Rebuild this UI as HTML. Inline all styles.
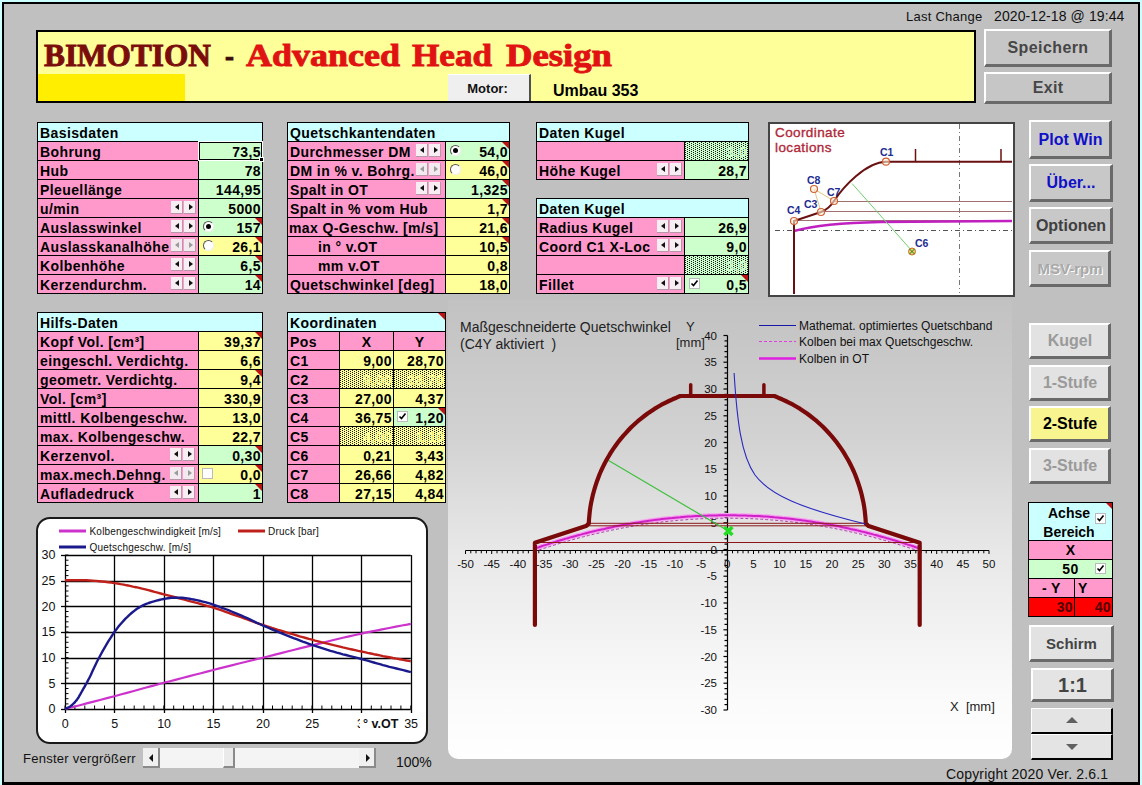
<!DOCTYPE html><html><head><meta charset="utf-8"><style>
html,body{margin:0;padding:0;}
body{width:1142px;height:785px;overflow:hidden;position:relative;background:#CCFFFF;font-family:"Liberation Sans",sans-serif;}
</style></head><body>
<div style="position:absolute;left:2px;top:2px;width:1138px;height:783px;background:#000;"></div>
<div style="position:absolute;left:4px;top:4px;width:1134px;height:778px;background:#C0C0C0;"></div>
<div style="position:absolute;left:906px;top:9px;white-space:nowrap;font-family:'Liberation Sans',sans-serif;font-size:13px;color:#111;letter-spacing:0.25px;line-height:15px;">Last Change</div>
<div style="position:absolute;left:994px;top:9px;white-space:nowrap;font-family:'Liberation Sans',sans-serif;font-size:14px;color:#111;letter-spacing:0.1px;line-height:15px;">2020-12-18 @ 19:44</div>
<div style="position:absolute;left:36px;top:30px;width:940px;height:73px;background:#000;"></div>
<div style="position:absolute;left:38px;top:32px;width:936px;height:69px;background:#FFFF99;"></div>
<div style="position:absolute;left:38px;top:74px;width:147px;height:27px;background:#FFEE00;"></div>
<div style="position:absolute;left:44px;top:36px;font-family:'Liberation Serif',serif;font-weight:bold;font-size:31px;line-height:40px;color:#7A0C0C;white-space:nowrap;transform:scaleX(1.0097);transform-origin:0 0;-webkit-text-stroke:0.9px #7A0C0C;">BIMOTION</div>
<div style="position:absolute;left:225px;top:36px;font-family:'Liberation Serif',serif;font-weight:bold;font-size:31px;line-height:40px;color:#3A0A0A;white-space:nowrap;transform:scaleX(0.8654);transform-origin:0 0;-webkit-text-stroke:0.9px #3A0A0A;">-</div>
<div style="position:absolute;left:246px;top:36px;font-family:'Liberation Serif',serif;font-weight:bold;font-size:31px;line-height:40px;color:#E01212;white-space:nowrap;transform:scaleX(1.1614);transform-origin:0 0;-webkit-text-stroke:0.9px #E01212;">Advanced</div>
<div style="position:absolute;left:412px;top:36px;font-family:'Liberation Serif',serif;font-weight:bold;font-size:31px;line-height:40px;color:#E01212;white-space:nowrap;transform:scaleX(1.1331);transform-origin:0 0;-webkit-text-stroke:0.9px #E01212;">Head</div>
<div style="position:absolute;left:506px;top:36px;font-family:'Liberation Serif',serif;font-weight:bold;font-size:31px;line-height:40px;color:#E01212;white-space:nowrap;transform:scaleX(1.1830);transform-origin:0 0;-webkit-text-stroke:0.9px #E01212;">Design</div>
<div style="position:absolute;left:448px;top:74px;width:81px;height:26px;background:#EFEFEF;border-right:2px solid #505050;border-top:1px solid #fff;"></div>
<div style="position:absolute;left:447px;top:75px;width:81px;white-space:nowrap;font-family:'Liberation Sans',sans-serif;font-weight:bold;font-size:13px;line-height:27px;text-align:center;color:#111;">Motor:</div>
<div style="position:absolute;left:553px;top:82px;white-space:nowrap;font-family:'Liberation Sans',sans-serif;font-weight:bold;font-size:16px;line-height:18px;color:#000;">Umbau 353</div>
<div style="position:absolute;left:984px;top:29px;width:123px;height:33px;background:#C6C6C6;border-top:2px solid #FFFFFF;border-left:2px solid #FFFFFF;border-right:3px solid #6A6A6A;border-bottom:3px solid #6A6A6A;"></div>
<div style="position:absolute;left:984px;top:29px;width:128px;height:38px;line-height:38px;text-align:center;font-family:'Liberation Sans',sans-serif;font-weight:bold;font-size:16px;color:#464646;letter-spacing:0.4px;white-space:nowrap;">Speichern</div>
<div style="position:absolute;left:984px;top:72px;width:123px;height:27px;background:#C6C6C6;border-top:2px solid #FFFFFF;border-left:2px solid #FFFFFF;border-right:3px solid #6A6A6A;border-bottom:3px solid #6A6A6A;"></div>
<div style="position:absolute;left:984px;top:72px;width:128px;height:32px;line-height:32px;text-align:center;font-family:'Liberation Sans',sans-serif;font-weight:bold;font-size:16px;color:#464646;letter-spacing:0.3px;white-space:nowrap;">Exit</div>
<div style="position:absolute;left:37px;top:122px;width:226px;height:172px;background:#000;"></div>
<div style="position:absolute;left:38px;top:123px;width:224px;height:18px;background:#CCFFFF;"></div>
<div style="position:absolute;left:40px;top:124px;height:19px;white-space:nowrap;font-family:'Liberation Sans',sans-serif;font-weight:bold;font-size:14px;line-height:19px;color:#000;letter-spacing:0.4px;">Basisdaten</div>
<div style="position:absolute;left:38px;top:142px;width:160px;height:18px;background:#FF99CC;"></div>
<div style="position:absolute;left:40px;top:143px;height:19px;white-space:nowrap;font-family:'Liberation Sans',sans-serif;font-weight:bold;font-size:14px;line-height:19px;color:#000;letter-spacing:0.4px;">Bohrung</div>
<div style="position:absolute;left:199px;top:142px;width:63px;height:18px;background:#CCFFCC;"></div>
<div style="position:absolute;left:199px;top:143px;width:62px;height:19px;white-space:nowrap;font-family:'Liberation Sans',sans-serif;font-weight:bold;font-size:14px;line-height:19px;color:#000;letter-spacing:0.4px;text-align:right;">73,5</div>
<div style="position:absolute;left:38px;top:161px;width:160px;height:18px;background:#FF99CC;"></div>
<div style="position:absolute;left:40px;top:162px;height:19px;white-space:nowrap;font-family:'Liberation Sans',sans-serif;font-weight:bold;font-size:14px;line-height:19px;color:#000;letter-spacing:0.4px;">Hub</div>
<div style="position:absolute;left:199px;top:161px;width:63px;height:18px;background:#CCFFCC;"></div>
<div style="position:absolute;left:199px;top:162px;width:62px;height:19px;white-space:nowrap;font-family:'Liberation Sans',sans-serif;font-weight:bold;font-size:14px;line-height:19px;color:#000;letter-spacing:0.4px;text-align:right;">78</div>
<div style="position:absolute;left:38px;top:180px;width:160px;height:18px;background:#FF99CC;"></div>
<div style="position:absolute;left:40px;top:181px;height:19px;white-space:nowrap;font-family:'Liberation Sans',sans-serif;font-weight:bold;font-size:14px;line-height:19px;color:#000;letter-spacing:0.4px;">Pleuellänge</div>
<div style="position:absolute;left:199px;top:180px;width:63px;height:18px;background:#CCFFCC;"></div>
<div style="position:absolute;left:199px;top:181px;width:62px;height:19px;white-space:nowrap;font-family:'Liberation Sans',sans-serif;font-weight:bold;font-size:14px;line-height:19px;color:#000;letter-spacing:0.4px;text-align:right;">144,95</div>
<div style="position:absolute;left:38px;top:199px;width:160px;height:18px;background:#FF99CC;"></div>
<div style="position:absolute;left:40px;top:200px;height:19px;white-space:nowrap;font-family:'Liberation Sans',sans-serif;font-weight:bold;font-size:14px;line-height:19px;color:#000;letter-spacing:0.4px;">u/min</div>
<div style="position:absolute;left:199px;top:199px;width:63px;height:18px;background:#CCFFCC;"></div>
<div style="position:absolute;left:199px;top:200px;width:62px;height:19px;white-space:nowrap;font-family:'Liberation Sans',sans-serif;font-weight:bold;font-size:14px;line-height:19px;color:#000;letter-spacing:0.4px;text-align:right;">5000</div>
<div style="position:absolute;left:38px;top:218px;width:160px;height:18px;background:#FF99CC;"></div>
<div style="position:absolute;left:40px;top:219px;height:19px;white-space:nowrap;font-family:'Liberation Sans',sans-serif;font-weight:bold;font-size:14px;line-height:19px;color:#000;letter-spacing:0.4px;">Auslasswinkel</div>
<div style="position:absolute;left:199px;top:218px;width:63px;height:18px;background:#CCFFCC;"></div>
<div style="position:absolute;left:199px;top:219px;width:62px;height:19px;white-space:nowrap;font-family:'Liberation Sans',sans-serif;font-weight:bold;font-size:14px;line-height:19px;color:#000;letter-spacing:0.4px;text-align:right;">157</div>
<div style="position:absolute;left:255px;top:218px;width:0;height:0;border-left:7px solid transparent;border-top:7px solid #BC1414;"></div>
<div style="position:absolute;left:38px;top:237px;width:160px;height:18px;background:#FF99CC;"></div>
<div style="position:absolute;left:40px;top:238px;height:19px;white-space:nowrap;font-family:'Liberation Sans',sans-serif;font-weight:bold;font-size:14px;line-height:19px;color:#000;letter-spacing:0.4px;">Auslasskanalhöhe</div>
<div style="position:absolute;left:199px;top:237px;width:63px;height:18px;background:#FFFF99;"></div>
<div style="position:absolute;left:199px;top:238px;width:62px;height:19px;white-space:nowrap;font-family:'Liberation Sans',sans-serif;font-weight:bold;font-size:14px;line-height:19px;color:#000;letter-spacing:0.4px;text-align:right;">26,1</div>
<div style="position:absolute;left:255px;top:237px;width:0;height:0;border-left:7px solid transparent;border-top:7px solid #BC1414;"></div>
<div style="position:absolute;left:38px;top:256px;width:160px;height:18px;background:#FF99CC;"></div>
<div style="position:absolute;left:40px;top:257px;height:19px;white-space:nowrap;font-family:'Liberation Sans',sans-serif;font-weight:bold;font-size:14px;line-height:19px;color:#000;letter-spacing:0.4px;">Kolbenhöhe</div>
<div style="position:absolute;left:199px;top:256px;width:63px;height:18px;background:#CCFFCC;"></div>
<div style="position:absolute;left:199px;top:257px;width:62px;height:19px;white-space:nowrap;font-family:'Liberation Sans',sans-serif;font-weight:bold;font-size:14px;line-height:19px;color:#000;letter-spacing:0.4px;text-align:right;">6,5</div>
<div style="position:absolute;left:255px;top:256px;width:0;height:0;border-left:7px solid transparent;border-top:7px solid #BC1414;"></div>
<div style="position:absolute;left:38px;top:275px;width:160px;height:18px;background:#FF99CC;"></div>
<div style="position:absolute;left:40px;top:276px;height:19px;white-space:nowrap;font-family:'Liberation Sans',sans-serif;font-weight:bold;font-size:14px;line-height:19px;color:#000;letter-spacing:0.4px;">Kerzendurchm.</div>
<div style="position:absolute;left:199px;top:275px;width:63px;height:18px;background:#CCFFCC;"></div>
<div style="position:absolute;left:199px;top:276px;width:62px;height:19px;white-space:nowrap;font-family:'Liberation Sans',sans-serif;font-weight:bold;font-size:14px;line-height:19px;color:#000;letter-spacing:0.4px;text-align:right;">14</div>
<div style="position:absolute;left:255px;top:275px;width:0;height:0;border-left:7px solid transparent;border-top:7px solid #BC1414;"></div>
<div style="position:absolute;left:199px;top:142px;width:61px;height:16px;border:1px solid #000;box-shadow:0 0 0 1px #fff;"></div>
<div style="position:absolute;left:259px;top:157px;width:3px;height:3px;background:#000;border:1px solid #fff;"></div>
<div style="position:absolute;left:171px;top:201px;width:11px;height:12px;background:#F6EEF2;border-right:1px solid #B898A8;border-bottom:1px solid #B898A8;"></div>
<div style="position:absolute;left:175px;top:204px;width:0;height:0;border-top:3.5px solid transparent;border-bottom:3.5px solid transparent;border-right:4px solid #111;"></div>
<div style="position:absolute;left:184px;top:201px;width:11px;height:12px;background:#F6EEF2;border-right:1px solid #B898A8;border-bottom:1px solid #B898A8;"></div>
<div style="position:absolute;left:189px;top:204px;width:0;height:0;border-top:3.5px solid transparent;border-bottom:3.5px solid transparent;border-left:4px solid #111;"></div>
<div style="position:absolute;left:171px;top:220px;width:11px;height:12px;background:#F6EEF2;border-right:1px solid #B898A8;border-bottom:1px solid #B898A8;"></div>
<div style="position:absolute;left:175px;top:223px;width:0;height:0;border-top:3.5px solid transparent;border-bottom:3.5px solid transparent;border-right:4px solid #111;"></div>
<div style="position:absolute;left:184px;top:220px;width:11px;height:12px;background:#F6EEF2;border-right:1px solid #B898A8;border-bottom:1px solid #B898A8;"></div>
<div style="position:absolute;left:189px;top:223px;width:0;height:0;border-top:3.5px solid transparent;border-bottom:3.5px solid transparent;border-left:4px solid #111;"></div>
<div style="position:absolute;left:171px;top:258px;width:11px;height:12px;background:#F6EEF2;border-right:1px solid #B898A8;border-bottom:1px solid #B898A8;"></div>
<div style="position:absolute;left:175px;top:261px;width:0;height:0;border-top:3.5px solid transparent;border-bottom:3.5px solid transparent;border-right:4px solid #111;"></div>
<div style="position:absolute;left:184px;top:258px;width:11px;height:12px;background:#F6EEF2;border-right:1px solid #B898A8;border-bottom:1px solid #B898A8;"></div>
<div style="position:absolute;left:189px;top:261px;width:0;height:0;border-top:3.5px solid transparent;border-bottom:3.5px solid transparent;border-left:4px solid #111;"></div>
<div style="position:absolute;left:171px;top:277px;width:11px;height:12px;background:#F6EEF2;border-right:1px solid #B898A8;border-bottom:1px solid #B898A8;"></div>
<div style="position:absolute;left:175px;top:280px;width:0;height:0;border-top:3.5px solid transparent;border-bottom:3.5px solid transparent;border-right:4px solid #111;"></div>
<div style="position:absolute;left:184px;top:277px;width:11px;height:12px;background:#F6EEF2;border-right:1px solid #B898A8;border-bottom:1px solid #B898A8;"></div>
<div style="position:absolute;left:189px;top:280px;width:0;height:0;border-top:3.5px solid transparent;border-bottom:3.5px solid transparent;border-left:4px solid #111;"></div>
<div style="position:absolute;left:171px;top:239px;width:11px;height:12px;background:#F2EAEE;border-right:1px solid #B898A8;border-bottom:1px solid #B898A8;"></div>
<div style="position:absolute;left:175px;top:242px;width:0;height:0;border-top:3.5px solid transparent;border-bottom:3.5px solid transparent;border-right:4px solid #9a9a9a;"></div>
<div style="position:absolute;left:184px;top:239px;width:11px;height:12px;background:#F2EAEE;border-right:1px solid #B898A8;border-bottom:1px solid #B898A8;"></div>
<div style="position:absolute;left:189px;top:242px;width:0;height:0;border-top:3.5px solid transparent;border-bottom:3.5px solid transparent;border-left:4px solid #9a9a9a;"></div>
<div style="position:absolute;left:203px;top:221px;width:9px;height:9px;border-radius:50%;background:#fff;border-top:1px solid #555;border-left:1px solid #555;border-right:1px solid #eee;border-bottom:1px solid #eee;"></div>
<div style="position:absolute;left:206px;top:224px;width:5px;height:5px;border-radius:50%;background:#000;"></div>
<div style="position:absolute;left:203px;top:240px;width:9px;height:9px;border-radius:50%;background:#fff;border-top:1px solid #555;border-left:1px solid #555;border-right:1px solid #eee;border-bottom:1px solid #eee;"></div>
<div style="position:absolute;left:287px;top:122px;width:223px;height:172px;background:#000;"></div>
<div style="position:absolute;left:288px;top:123px;width:221px;height:18px;background:#CCFFFF;"></div>
<div style="position:absolute;left:290px;top:124px;height:19px;white-space:nowrap;font-family:'Liberation Sans',sans-serif;font-weight:bold;font-size:14px;line-height:19px;color:#000;letter-spacing:0.4px;">Quetschkantendaten</div>
<div style="position:absolute;left:288px;top:142px;width:157px;height:18px;background:#FF99CC;"></div>
<div style="position:absolute;left:290px;top:143px;height:19px;white-space:nowrap;font-family:'Liberation Sans',sans-serif;font-weight:bold;font-size:14px;line-height:19px;color:#000;letter-spacing:0.4px;">Durchmesser DM</div>
<div style="position:absolute;left:446px;top:142px;width:63px;height:18px;background:#CCFFCC;"></div>
<div style="position:absolute;left:446px;top:143px;width:62px;height:19px;white-space:nowrap;font-family:'Liberation Sans',sans-serif;font-weight:bold;font-size:14px;line-height:19px;color:#000;letter-spacing:0.4px;text-align:right;">54,0</div>
<div style="position:absolute;left:502px;top:142px;width:0;height:0;border-left:7px solid transparent;border-top:7px solid #BC1414;"></div>
<div style="position:absolute;left:288px;top:161px;width:157px;height:18px;background:#FF99CC;"></div>
<div style="position:absolute;left:290px;top:162px;height:19px;white-space:nowrap;font-family:'Liberation Sans',sans-serif;font-weight:bold;font-size:14px;line-height:19px;color:#000;letter-spacing:0.4px;">DM in % v. Bohrg.</div>
<div style="position:absolute;left:446px;top:161px;width:63px;height:18px;background:#FFFF99;"></div>
<div style="position:absolute;left:446px;top:162px;width:62px;height:19px;white-space:nowrap;font-family:'Liberation Sans',sans-serif;font-weight:bold;font-size:14px;line-height:19px;color:#000;letter-spacing:0.4px;text-align:right;">46,0</div>
<div style="position:absolute;left:502px;top:161px;width:0;height:0;border-left:7px solid transparent;border-top:7px solid #BC1414;"></div>
<div style="position:absolute;left:288px;top:180px;width:157px;height:18px;background:#FF99CC;"></div>
<div style="position:absolute;left:290px;top:181px;height:19px;white-space:nowrap;font-family:'Liberation Sans',sans-serif;font-weight:bold;font-size:14px;line-height:19px;color:#000;letter-spacing:0.4px;">Spalt in OT</div>
<div style="position:absolute;left:446px;top:180px;width:63px;height:18px;background:#CCFFCC;"></div>
<div style="position:absolute;left:446px;top:181px;width:62px;height:19px;white-space:nowrap;font-family:'Liberation Sans',sans-serif;font-weight:bold;font-size:14px;line-height:19px;color:#000;letter-spacing:0.4px;text-align:right;">1,325</div>
<div style="position:absolute;left:502px;top:180px;width:0;height:0;border-left:7px solid transparent;border-top:7px solid #BC1414;"></div>
<div style="position:absolute;left:288px;top:199px;width:157px;height:18px;background:#FF99CC;"></div>
<div style="position:absolute;left:290px;top:200px;height:19px;white-space:nowrap;font-family:'Liberation Sans',sans-serif;font-weight:bold;font-size:14px;line-height:19px;color:#000;letter-spacing:0.4px;">Spalt in % vom Hub</div>
<div style="position:absolute;left:446px;top:199px;width:63px;height:18px;background:#FFFF99;"></div>
<div style="position:absolute;left:446px;top:200px;width:62px;height:19px;white-space:nowrap;font-family:'Liberation Sans',sans-serif;font-weight:bold;font-size:14px;line-height:19px;color:#000;letter-spacing:0.4px;text-align:right;">1,7</div>
<div style="position:absolute;left:502px;top:199px;width:0;height:0;border-left:7px solid transparent;border-top:7px solid #BC1414;"></div>
<div style="position:absolute;left:288px;top:218px;width:157px;height:18px;background:#FF99CC;"></div>
<div style="position:absolute;left:289px;top:219px;height:19px;white-space:nowrap;font-family:'Liberation Sans',sans-serif;font-weight:bold;font-size:14px;line-height:19px;color:#000;letter-spacing:0.4px;">max Q-Geschw. [m/s]</div>
<div style="position:absolute;left:446px;top:218px;width:63px;height:18px;background:#FFFF99;"></div>
<div style="position:absolute;left:446px;top:219px;width:62px;height:19px;white-space:nowrap;font-family:'Liberation Sans',sans-serif;font-weight:bold;font-size:14px;line-height:19px;color:#000;letter-spacing:0.4px;text-align:right;">21,6</div>
<div style="position:absolute;left:502px;top:218px;width:0;height:0;border-left:7px solid transparent;border-top:7px solid #BC1414;"></div>
<div style="position:absolute;left:288px;top:237px;width:157px;height:18px;background:#FF99CC;"></div>
<div style="position:absolute;left:318px;top:238px;height:19px;white-space:nowrap;font-family:'Liberation Sans',sans-serif;font-weight:bold;font-size:14px;line-height:19px;color:#000;letter-spacing:0.4px;">in ° v.OT</div>
<div style="position:absolute;left:446px;top:237px;width:63px;height:18px;background:#FFFF99;"></div>
<div style="position:absolute;left:446px;top:238px;width:62px;height:19px;white-space:nowrap;font-family:'Liberation Sans',sans-serif;font-weight:bold;font-size:14px;line-height:19px;color:#000;letter-spacing:0.4px;text-align:right;">10,5</div>
<div style="position:absolute;left:502px;top:237px;width:0;height:0;border-left:7px solid transparent;border-top:7px solid #BC1414;"></div>
<div style="position:absolute;left:288px;top:256px;width:157px;height:18px;background:#FF99CC;"></div>
<div style="position:absolute;left:318px;top:257px;height:19px;white-space:nowrap;font-family:'Liberation Sans',sans-serif;font-weight:bold;font-size:14px;line-height:19px;color:#000;letter-spacing:0.4px;">mm v.OT</div>
<div style="position:absolute;left:446px;top:256px;width:63px;height:18px;background:#FFFF99;"></div>
<div style="position:absolute;left:446px;top:257px;width:62px;height:19px;white-space:nowrap;font-family:'Liberation Sans',sans-serif;font-weight:bold;font-size:14px;line-height:19px;color:#000;letter-spacing:0.4px;text-align:right;">0,8</div>
<div style="position:absolute;left:288px;top:275px;width:157px;height:18px;background:#FF99CC;"></div>
<div style="position:absolute;left:290px;top:276px;height:19px;white-space:nowrap;font-family:'Liberation Sans',sans-serif;font-weight:bold;font-size:14px;line-height:19px;color:#000;letter-spacing:0.4px;">Quetschwinkel [deg]</div>
<div style="position:absolute;left:446px;top:275px;width:63px;height:18px;background:#FFFF99;"></div>
<div style="position:absolute;left:446px;top:276px;width:62px;height:19px;white-space:nowrap;font-family:'Liberation Sans',sans-serif;font-weight:bold;font-size:14px;line-height:19px;color:#000;letter-spacing:0.4px;text-align:right;">18,0</div>
<div style="position:absolute;left:416px;top:144px;width:11px;height:12px;background:#F6EEF2;border-right:1px solid #B898A8;border-bottom:1px solid #B898A8;"></div>
<div style="position:absolute;left:420px;top:147px;width:0;height:0;border-top:3.5px solid transparent;border-bottom:3.5px solid transparent;border-right:4px solid #111;"></div>
<div style="position:absolute;left:429px;top:144px;width:11px;height:12px;background:#F6EEF2;border-right:1px solid #B898A8;border-bottom:1px solid #B898A8;"></div>
<div style="position:absolute;left:434px;top:147px;width:0;height:0;border-top:3.5px solid transparent;border-bottom:3.5px solid transparent;border-left:4px solid #111;"></div>
<div style="position:absolute;left:416px;top:163px;width:11px;height:12px;background:#F2EAEE;border-right:1px solid #B898A8;border-bottom:1px solid #B898A8;"></div>
<div style="position:absolute;left:420px;top:166px;width:0;height:0;border-top:3.5px solid transparent;border-bottom:3.5px solid transparent;border-right:4px solid #9a9a9a;"></div>
<div style="position:absolute;left:429px;top:163px;width:11px;height:12px;background:#F2EAEE;border-right:1px solid #B898A8;border-bottom:1px solid #B898A8;"></div>
<div style="position:absolute;left:434px;top:166px;width:0;height:0;border-top:3.5px solid transparent;border-bottom:3.5px solid transparent;border-left:4px solid #9a9a9a;"></div>
<div style="position:absolute;left:416px;top:182px;width:11px;height:12px;background:#F6EEF2;border-right:1px solid #B898A8;border-bottom:1px solid #B898A8;"></div>
<div style="position:absolute;left:420px;top:185px;width:0;height:0;border-top:3.5px solid transparent;border-bottom:3.5px solid transparent;border-right:4px solid #111;"></div>
<div style="position:absolute;left:429px;top:182px;width:11px;height:12px;background:#F6EEF2;border-right:1px solid #B898A8;border-bottom:1px solid #B898A8;"></div>
<div style="position:absolute;left:434px;top:185px;width:0;height:0;border-top:3.5px solid transparent;border-bottom:3.5px solid transparent;border-left:4px solid #111;"></div>
<div style="position:absolute;left:450px;top:145px;width:9px;height:9px;border-radius:50%;background:#fff;border-top:1px solid #555;border-left:1px solid #555;border-right:1px solid #eee;border-bottom:1px solid #eee;"></div>
<div style="position:absolute;left:453px;top:148px;width:5px;height:5px;border-radius:50%;background:#000;"></div>
<div style="position:absolute;left:450px;top:164px;width:9px;height:9px;border-radius:50%;background:#fff;border-top:1px solid #555;border-left:1px solid #555;border-right:1px solid #eee;border-bottom:1px solid #eee;"></div>
<div style="position:absolute;left:536px;top:122px;width:213px;height:58px;background:#000;"></div>
<div style="position:absolute;left:537px;top:123px;width:211px;height:18px;background:#CCFFFF;"></div>
<div style="position:absolute;left:539px;top:124px;height:19px;white-space:nowrap;font-family:'Liberation Sans',sans-serif;font-weight:bold;font-size:14px;line-height:19px;color:#000;letter-spacing:0.4px;">Daten Kugel</div>
<div style="position:absolute;left:537px;top:142px;width:147px;height:18px;background:#FF99CC;"></div>
<div style="position:absolute;left:685px;top:142px;width:63px;height:18px;background:#CCFFCC;"></div>
<svg style="position:absolute;left:685px;top:142px" width="63" height="18"><defs><pattern id="dp685_142" width="4" height="2" patternUnits="userSpaceOnUse"><rect x="0" y="0" width="1" height="1" fill="#1a1a1a"/><rect x="2" y="1" width="1" height="1" fill="#1a1a1a"/></pattern></defs><rect x="0" y="0" width="63" height="18" fill="url(#dp685_142)"/></svg>
<div style="position:absolute;left:685px;top:143px;width:62px;height:19px;white-space:nowrap;font-family:'Liberation Sans',sans-serif;font-weight:bold;font-size:14px;line-height:19px;color:#000;letter-spacing:0.4px;text-align:right;color:#CCFFCC;">3,0</div>
<div style="position:absolute;left:537px;top:161px;width:147px;height:18px;background:#FF99CC;"></div>
<div style="position:absolute;left:539px;top:162px;height:19px;white-space:nowrap;font-family:'Liberation Sans',sans-serif;font-weight:bold;font-size:14px;line-height:19px;color:#000;letter-spacing:0.4px;">Höhe Kugel</div>
<div style="position:absolute;left:685px;top:161px;width:63px;height:18px;background:#CCFFCC;"></div>
<div style="position:absolute;left:685px;top:162px;width:62px;height:19px;white-space:nowrap;font-family:'Liberation Sans',sans-serif;font-weight:bold;font-size:14px;line-height:19px;color:#000;letter-spacing:0.4px;text-align:right;">28,7</div>
<div style="position:absolute;left:657px;top:163px;width:11px;height:12px;background:#F6EEF2;border-right:1px solid #B898A8;border-bottom:1px solid #B898A8;"></div>
<div style="position:absolute;left:661px;top:166px;width:0;height:0;border-top:3.5px solid transparent;border-bottom:3.5px solid transparent;border-right:4px solid #111;"></div>
<div style="position:absolute;left:670px;top:163px;width:11px;height:12px;background:#F6EEF2;border-right:1px solid #B898A8;border-bottom:1px solid #B898A8;"></div>
<div style="position:absolute;left:675px;top:166px;width:0;height:0;border-top:3.5px solid transparent;border-bottom:3.5px solid transparent;border-left:4px solid #111;"></div>
<div style="position:absolute;left:536px;top:198px;width:213px;height:96px;background:#000;"></div>
<div style="position:absolute;left:537px;top:199px;width:211px;height:18px;background:#CCFFFF;"></div>
<div style="position:absolute;left:539px;top:200px;height:19px;white-space:nowrap;font-family:'Liberation Sans',sans-serif;font-weight:bold;font-size:14px;line-height:19px;color:#000;letter-spacing:0.4px;">Daten Kugel</div>
<div style="position:absolute;left:537px;top:218px;width:147px;height:18px;background:#FF99CC;"></div>
<div style="position:absolute;left:539px;top:219px;height:19px;white-space:nowrap;font-family:'Liberation Sans',sans-serif;font-weight:bold;font-size:14px;line-height:19px;color:#000;letter-spacing:0.4px;">Radius Kugel</div>
<div style="position:absolute;left:685px;top:218px;width:63px;height:18px;background:#CCFFCC;"></div>
<div style="position:absolute;left:685px;top:219px;width:62px;height:19px;white-space:nowrap;font-family:'Liberation Sans',sans-serif;font-weight:bold;font-size:14px;line-height:19px;color:#000;letter-spacing:0.4px;text-align:right;">26,9</div>
<div style="position:absolute;left:537px;top:237px;width:147px;height:18px;background:#FF99CC;"></div>
<div style="position:absolute;left:539px;top:238px;height:19px;white-space:nowrap;font-family:'Liberation Sans',sans-serif;font-weight:bold;font-size:14px;line-height:19px;color:#000;letter-spacing:0.4px;">Coord C1 X-Loc</div>
<div style="position:absolute;left:685px;top:237px;width:63px;height:18px;background:#CCFFCC;"></div>
<div style="position:absolute;left:685px;top:238px;width:62px;height:19px;white-space:nowrap;font-family:'Liberation Sans',sans-serif;font-weight:bold;font-size:14px;line-height:19px;color:#000;letter-spacing:0.4px;text-align:right;">9,0</div>
<div style="position:absolute;left:537px;top:256px;width:147px;height:18px;background:#FF99CC;"></div>
<div style="position:absolute;left:685px;top:256px;width:63px;height:18px;background:#CCFFCC;"></div>
<svg style="position:absolute;left:685px;top:256px" width="63" height="18"><defs><pattern id="dp685_256" width="4" height="2" patternUnits="userSpaceOnUse"><rect x="0" y="0" width="1" height="1" fill="#1a1a1a"/><rect x="2" y="1" width="1" height="1" fill="#1a1a1a"/></pattern></defs><rect x="0" y="0" width="63" height="18" fill="url(#dp685_256)"/></svg>
<div style="position:absolute;left:685px;top:257px;width:62px;height:19px;white-space:nowrap;font-family:'Liberation Sans',sans-serif;font-weight:bold;font-size:14px;line-height:19px;color:#000;letter-spacing:0.4px;text-align:right;color:#CCFFCC;">3,0</div>
<div style="position:absolute;left:537px;top:275px;width:147px;height:18px;background:#FF99CC;"></div>
<div style="position:absolute;left:539px;top:276px;height:19px;white-space:nowrap;font-family:'Liberation Sans',sans-serif;font-weight:bold;font-size:14px;line-height:19px;color:#000;letter-spacing:0.4px;">Fillet</div>
<div style="position:absolute;left:685px;top:275px;width:63px;height:18px;background:#CCFFCC;"></div>
<div style="position:absolute;left:685px;top:276px;width:62px;height:19px;white-space:nowrap;font-family:'Liberation Sans',sans-serif;font-weight:bold;font-size:14px;line-height:19px;color:#000;letter-spacing:0.4px;text-align:right;">0,5</div>
<div style="position:absolute;left:741px;top:275px;width:0;height:0;border-left:7px solid transparent;border-top:7px solid #BC1414;"></div>
<div style="position:absolute;left:657px;top:220px;width:11px;height:12px;background:#F6EEF2;border-right:1px solid #B898A8;border-bottom:1px solid #B898A8;"></div>
<div style="position:absolute;left:661px;top:223px;width:0;height:0;border-top:3.5px solid transparent;border-bottom:3.5px solid transparent;border-right:4px solid #111;"></div>
<div style="position:absolute;left:670px;top:220px;width:11px;height:12px;background:#F6EEF2;border-right:1px solid #B898A8;border-bottom:1px solid #B898A8;"></div>
<div style="position:absolute;left:675px;top:223px;width:0;height:0;border-top:3.5px solid transparent;border-bottom:3.5px solid transparent;border-left:4px solid #111;"></div>
<div style="position:absolute;left:657px;top:239px;width:11px;height:12px;background:#F6EEF2;border-right:1px solid #B898A8;border-bottom:1px solid #B898A8;"></div>
<div style="position:absolute;left:661px;top:242px;width:0;height:0;border-top:3.5px solid transparent;border-bottom:3.5px solid transparent;border-right:4px solid #111;"></div>
<div style="position:absolute;left:670px;top:239px;width:11px;height:12px;background:#F6EEF2;border-right:1px solid #B898A8;border-bottom:1px solid #B898A8;"></div>
<div style="position:absolute;left:675px;top:242px;width:0;height:0;border-top:3.5px solid transparent;border-bottom:3.5px solid transparent;border-left:4px solid #111;"></div>
<div style="position:absolute;left:657px;top:277px;width:11px;height:12px;background:#F6EEF2;border-right:1px solid #B898A8;border-bottom:1px solid #B898A8;"></div>
<div style="position:absolute;left:661px;top:280px;width:0;height:0;border-top:3.5px solid transparent;border-bottom:3.5px solid transparent;border-right:4px solid #111;"></div>
<div style="position:absolute;left:670px;top:277px;width:11px;height:12px;background:#F6EEF2;border-right:1px solid #B898A8;border-bottom:1px solid #B898A8;"></div>
<div style="position:absolute;left:675px;top:280px;width:0;height:0;border-top:3.5px solid transparent;border-bottom:3.5px solid transparent;border-left:4px solid #111;"></div>
<div style="position:absolute;left:689px;top:278px;width:9px;height:9px;background:#fff;border:1px solid #bbb;"></div>
<svg style="position:absolute;left:689px;top:278px" width="11" height="11"><path d="M2.5 5.5 L4.5 7.5 L8.5 2.5" stroke="#000" stroke-width="1.6" fill="none"/></svg>
<div style="position:absolute;left:37px;top:312px;width:226px;height:191px;background:#000;"></div>
<div style="position:absolute;left:38px;top:313px;width:224px;height:18px;background:#CCFFFF;"></div>
<div style="position:absolute;left:40px;top:314px;height:19px;white-space:nowrap;font-family:'Liberation Sans',sans-serif;font-weight:bold;font-size:14px;line-height:19px;color:#000;letter-spacing:0.4px;">Hilfs-Daten</div>
<div style="position:absolute;left:38px;top:332px;width:160px;height:18px;background:#FF99CC;"></div>
<div style="position:absolute;left:40px;top:333px;height:19px;white-space:nowrap;font-family:'Liberation Sans',sans-serif;font-weight:bold;font-size:14px;line-height:19px;color:#000;letter-spacing:0.4px;">Kopf Vol. [cm³]</div>
<div style="position:absolute;left:199px;top:332px;width:63px;height:18px;background:#FFFF99;"></div>
<div style="position:absolute;left:199px;top:333px;width:62px;height:19px;white-space:nowrap;font-family:'Liberation Sans',sans-serif;font-weight:bold;font-size:14px;line-height:19px;color:#000;letter-spacing:0.4px;text-align:right;">39,37</div>
<div style="position:absolute;left:255px;top:332px;width:0;height:0;border-left:7px solid transparent;border-top:7px solid #BC1414;"></div>
<div style="position:absolute;left:38px;top:351px;width:160px;height:18px;background:#FF99CC;"></div>
<div style="position:absolute;left:40px;top:352px;height:19px;white-space:nowrap;font-family:'Liberation Sans',sans-serif;font-weight:bold;font-size:14px;line-height:19px;color:#000;letter-spacing:0.4px;">eingeschl. Verdichtg.</div>
<div style="position:absolute;left:199px;top:351px;width:63px;height:18px;background:#FFFF99;"></div>
<div style="position:absolute;left:199px;top:352px;width:62px;height:19px;white-space:nowrap;font-family:'Liberation Sans',sans-serif;font-weight:bold;font-size:14px;line-height:19px;color:#000;letter-spacing:0.4px;text-align:right;">6,6</div>
<div style="position:absolute;left:38px;top:370px;width:160px;height:18px;background:#FF99CC;"></div>
<div style="position:absolute;left:40px;top:371px;height:19px;white-space:nowrap;font-family:'Liberation Sans',sans-serif;font-weight:bold;font-size:14px;line-height:19px;color:#000;letter-spacing:0.4px;">geometr. Verdichtg.</div>
<div style="position:absolute;left:199px;top:370px;width:63px;height:18px;background:#FFFF99;"></div>
<div style="position:absolute;left:199px;top:371px;width:62px;height:19px;white-space:nowrap;font-family:'Liberation Sans',sans-serif;font-weight:bold;font-size:14px;line-height:19px;color:#000;letter-spacing:0.4px;text-align:right;">9,4</div>
<div style="position:absolute;left:255px;top:370px;width:0;height:0;border-left:7px solid transparent;border-top:7px solid #BC1414;"></div>
<div style="position:absolute;left:38px;top:389px;width:160px;height:18px;background:#FF99CC;"></div>
<div style="position:absolute;left:40px;top:390px;height:19px;white-space:nowrap;font-family:'Liberation Sans',sans-serif;font-weight:bold;font-size:14px;line-height:19px;color:#000;letter-spacing:0.4px;">Vol. [cm³]</div>
<div style="position:absolute;left:199px;top:389px;width:63px;height:18px;background:#FFFF99;"></div>
<div style="position:absolute;left:199px;top:390px;width:62px;height:19px;white-space:nowrap;font-family:'Liberation Sans',sans-serif;font-weight:bold;font-size:14px;line-height:19px;color:#000;letter-spacing:0.4px;text-align:right;">330,9</div>
<div style="position:absolute;left:38px;top:408px;width:160px;height:18px;background:#FF99CC;"></div>
<div style="position:absolute;left:40px;top:409px;height:19px;white-space:nowrap;font-family:'Liberation Sans',sans-serif;font-weight:bold;font-size:14px;line-height:19px;color:#000;letter-spacing:0.4px;">mittl. Kolbengeschw.</div>
<div style="position:absolute;left:199px;top:408px;width:63px;height:18px;background:#FFFF99;"></div>
<div style="position:absolute;left:199px;top:409px;width:62px;height:19px;white-space:nowrap;font-family:'Liberation Sans',sans-serif;font-weight:bold;font-size:14px;line-height:19px;color:#000;letter-spacing:0.4px;text-align:right;">13,0</div>
<div style="position:absolute;left:38px;top:427px;width:160px;height:18px;background:#FF99CC;"></div>
<div style="position:absolute;left:40px;top:428px;height:19px;white-space:nowrap;font-family:'Liberation Sans',sans-serif;font-weight:bold;font-size:14px;line-height:19px;color:#000;letter-spacing:0.4px;">max. Kolbengeschw.</div>
<div style="position:absolute;left:199px;top:427px;width:63px;height:18px;background:#FFFF99;"></div>
<div style="position:absolute;left:199px;top:428px;width:62px;height:19px;white-space:nowrap;font-family:'Liberation Sans',sans-serif;font-weight:bold;font-size:14px;line-height:19px;color:#000;letter-spacing:0.4px;text-align:right;">22,7</div>
<div style="position:absolute;left:38px;top:446px;width:160px;height:18px;background:#FF99CC;"></div>
<div style="position:absolute;left:40px;top:447px;height:19px;white-space:nowrap;font-family:'Liberation Sans',sans-serif;font-weight:bold;font-size:14px;line-height:19px;color:#000;letter-spacing:0.4px;">Kerzenvol.</div>
<div style="position:absolute;left:199px;top:446px;width:63px;height:18px;background:#CCFFCC;"></div>
<div style="position:absolute;left:199px;top:447px;width:62px;height:19px;white-space:nowrap;font-family:'Liberation Sans',sans-serif;font-weight:bold;font-size:14px;line-height:19px;color:#000;letter-spacing:0.4px;text-align:right;">0,30</div>
<div style="position:absolute;left:255px;top:446px;width:0;height:0;border-left:7px solid transparent;border-top:7px solid #BC1414;"></div>
<div style="position:absolute;left:38px;top:465px;width:160px;height:18px;background:#FF99CC;"></div>
<div style="position:absolute;left:40px;top:466px;height:19px;white-space:nowrap;font-family:'Liberation Sans',sans-serif;font-weight:bold;font-size:14px;line-height:19px;color:#000;letter-spacing:0.4px;">max.mech.Dehng.</div>
<div style="position:absolute;left:199px;top:465px;width:63px;height:18px;background:#FFFF99;"></div>
<div style="position:absolute;left:199px;top:466px;width:62px;height:19px;white-space:nowrap;font-family:'Liberation Sans',sans-serif;font-weight:bold;font-size:14px;line-height:19px;color:#000;letter-spacing:0.4px;text-align:right;">0,0</div>
<div style="position:absolute;left:255px;top:465px;width:0;height:0;border-left:7px solid transparent;border-top:7px solid #BC1414;"></div>
<div style="position:absolute;left:38px;top:484px;width:160px;height:18px;background:#FF99CC;"></div>
<div style="position:absolute;left:40px;top:485px;height:19px;white-space:nowrap;font-family:'Liberation Sans',sans-serif;font-weight:bold;font-size:14px;line-height:19px;color:#000;letter-spacing:0.4px;">Aufladedruck</div>
<div style="position:absolute;left:199px;top:484px;width:63px;height:18px;background:#CCFFCC;"></div>
<div style="position:absolute;left:199px;top:485px;width:62px;height:19px;white-space:nowrap;font-family:'Liberation Sans',sans-serif;font-weight:bold;font-size:14px;line-height:19px;color:#000;letter-spacing:0.4px;text-align:right;">1</div>
<div style="position:absolute;left:255px;top:484px;width:0;height:0;border-left:7px solid transparent;border-top:7px solid #BC1414;"></div>
<div style="position:absolute;left:170px;top:448px;width:11px;height:12px;background:#F6EEF2;border-right:1px solid #B898A8;border-bottom:1px solid #B898A8;"></div>
<div style="position:absolute;left:174px;top:451px;width:0;height:0;border-top:3.5px solid transparent;border-bottom:3.5px solid transparent;border-right:4px solid #111;"></div>
<div style="position:absolute;left:183px;top:448px;width:11px;height:12px;background:#F6EEF2;border-right:1px solid #B898A8;border-bottom:1px solid #B898A8;"></div>
<div style="position:absolute;left:188px;top:451px;width:0;height:0;border-top:3.5px solid transparent;border-bottom:3.5px solid transparent;border-left:4px solid #111;"></div>
<div style="position:absolute;left:170px;top:467px;width:11px;height:12px;background:#F2EAEE;border-right:1px solid #B898A8;border-bottom:1px solid #B898A8;"></div>
<div style="position:absolute;left:174px;top:470px;width:0;height:0;border-top:3.5px solid transparent;border-bottom:3.5px solid transparent;border-right:4px solid #9a9a9a;"></div>
<div style="position:absolute;left:183px;top:467px;width:11px;height:12px;background:#F2EAEE;border-right:1px solid #B898A8;border-bottom:1px solid #B898A8;"></div>
<div style="position:absolute;left:188px;top:470px;width:0;height:0;border-top:3.5px solid transparent;border-bottom:3.5px solid transparent;border-left:4px solid #9a9a9a;"></div>
<div style="position:absolute;left:170px;top:486px;width:11px;height:12px;background:#F6EEF2;border-right:1px solid #B898A8;border-bottom:1px solid #B898A8;"></div>
<div style="position:absolute;left:174px;top:489px;width:0;height:0;border-top:3.5px solid transparent;border-bottom:3.5px solid transparent;border-right:4px solid #111;"></div>
<div style="position:absolute;left:183px;top:486px;width:11px;height:12px;background:#F6EEF2;border-right:1px solid #B898A8;border-bottom:1px solid #B898A8;"></div>
<div style="position:absolute;left:188px;top:489px;width:0;height:0;border-top:3.5px solid transparent;border-bottom:3.5px solid transparent;border-left:4px solid #111;"></div>
<div style="position:absolute;left:202px;top:468px;width:9px;height:9px;background:#fff;border:1px solid #bbb;"></div>
<div style="position:absolute;left:287px;top:312px;width:159px;height:191px;background:#000;"></div>
<div style="position:absolute;left:288px;top:313px;width:157px;height:18px;background:#CCFFFF;"></div>
<div style="position:absolute;left:290px;top:314px;height:19px;white-space:nowrap;font-family:'Liberation Sans',sans-serif;font-weight:bold;font-size:14px;line-height:19px;color:#000;letter-spacing:0.4px;">Koordinaten</div>
<div style="position:absolute;left:438px;top:313px;width:0;height:0;border-left:7px solid transparent;border-top:7px solid #BC1414;"></div>
<div style="position:absolute;left:288px;top:332px;width:51px;height:18px;background:#FF99CC;"></div>
<div style="position:absolute;left:290px;top:333px;height:19px;white-space:nowrap;font-family:'Liberation Sans',sans-serif;font-weight:bold;font-size:14px;line-height:19px;color:#000;letter-spacing:0.4px;">Pos</div>
<div style="position:absolute;left:340px;top:332px;width:53px;height:18px;background:#FF99CC;"></div>
<div style="position:absolute;left:340px;top:333px;width:53px;height:19px;white-space:nowrap;font-family:'Liberation Sans',sans-serif;font-weight:bold;font-size:14px;line-height:19px;color:#000;letter-spacing:0.4px;text-align:center;">X</div>
<div style="position:absolute;left:394px;top:332px;width:51px;height:18px;background:#FF99CC;"></div>
<div style="position:absolute;left:394px;top:333px;width:51px;height:19px;white-space:nowrap;font-family:'Liberation Sans',sans-serif;font-weight:bold;font-size:14px;line-height:19px;color:#000;letter-spacing:0.4px;text-align:center;">Y</div>
<div style="position:absolute;left:288px;top:351px;width:51px;height:18px;background:#FF99CC;"></div>
<div style="position:absolute;left:290px;top:352px;height:19px;white-space:nowrap;font-family:'Liberation Sans',sans-serif;font-weight:bold;font-size:14px;line-height:19px;color:#000;letter-spacing:0.4px;">C1</div>
<div style="position:absolute;left:340px;top:351px;width:53px;height:18px;background:#FFFF99;"></div>
<div style="position:absolute;left:340px;top:352px;width:52px;height:19px;white-space:nowrap;font-family:'Liberation Sans',sans-serif;font-weight:bold;font-size:14px;line-height:19px;color:#000;letter-spacing:0.4px;text-align:right;">9,00</div>
<div style="position:absolute;left:394px;top:351px;width:51px;height:18px;background:#FFFF99;"></div>
<div style="position:absolute;left:394px;top:352px;width:50px;height:19px;white-space:nowrap;font-family:'Liberation Sans',sans-serif;font-weight:bold;font-size:14px;line-height:19px;color:#000;letter-spacing:0.4px;text-align:right;">28,70</div>
<div style="position:absolute;left:288px;top:370px;width:51px;height:18px;background:#FF99CC;"></div>
<div style="position:absolute;left:290px;top:371px;height:19px;white-space:nowrap;font-family:'Liberation Sans',sans-serif;font-weight:bold;font-size:14px;line-height:19px;color:#000;letter-spacing:0.4px;">C2</div>
<div style="position:absolute;left:340px;top:370px;width:53px;height:18px;background:#FFFF99;"></div>
<svg style="position:absolute;left:340px;top:370px" width="53" height="18"><defs><pattern id="dp340_370" width="4" height="2" patternUnits="userSpaceOnUse"><rect x="0" y="0" width="1" height="1" fill="#1a1a1a"/><rect x="2" y="1" width="1" height="1" fill="#1a1a1a"/></pattern></defs><rect x="0" y="0" width="53" height="18" fill="url(#dp340_370)"/></svg>
<div style="position:absolute;left:340px;top:371px;width:52px;height:19px;white-space:nowrap;font-family:'Liberation Sans',sans-serif;font-weight:bold;font-size:14px;line-height:19px;color:#000;letter-spacing:0.4px;text-align:right;color:#FFFF99;">9,00</div>
<div style="position:absolute;left:394px;top:370px;width:51px;height:18px;background:#FFFF99;"></div>
<svg style="position:absolute;left:394px;top:370px" width="51" height="18"><defs><pattern id="dp394_370" width="4" height="2" patternUnits="userSpaceOnUse"><rect x="0" y="0" width="1" height="1" fill="#1a1a1a"/><rect x="2" y="1" width="1" height="1" fill="#1a1a1a"/></pattern></defs><rect x="0" y="0" width="51" height="18" fill="url(#dp394_370)"/></svg>
<div style="position:absolute;left:394px;top:371px;width:50px;height:19px;white-space:nowrap;font-family:'Liberation Sans',sans-serif;font-weight:bold;font-size:14px;line-height:19px;color:#000;letter-spacing:0.4px;text-align:right;color:#FFFF99;">28,70</div>
<div style="position:absolute;left:288px;top:389px;width:51px;height:18px;background:#FF99CC;"></div>
<div style="position:absolute;left:290px;top:390px;height:19px;white-space:nowrap;font-family:'Liberation Sans',sans-serif;font-weight:bold;font-size:14px;line-height:19px;color:#000;letter-spacing:0.4px;">C3</div>
<div style="position:absolute;left:340px;top:389px;width:53px;height:18px;background:#FFFF99;"></div>
<div style="position:absolute;left:340px;top:390px;width:52px;height:19px;white-space:nowrap;font-family:'Liberation Sans',sans-serif;font-weight:bold;font-size:14px;line-height:19px;color:#000;letter-spacing:0.4px;text-align:right;">27,00</div>
<div style="position:absolute;left:394px;top:389px;width:51px;height:18px;background:#FFFF99;"></div>
<div style="position:absolute;left:394px;top:390px;width:50px;height:19px;white-space:nowrap;font-family:'Liberation Sans',sans-serif;font-weight:bold;font-size:14px;line-height:19px;color:#000;letter-spacing:0.4px;text-align:right;">4,37</div>
<div style="position:absolute;left:288px;top:408px;width:51px;height:18px;background:#FF99CC;"></div>
<div style="position:absolute;left:290px;top:409px;height:19px;white-space:nowrap;font-family:'Liberation Sans',sans-serif;font-weight:bold;font-size:14px;line-height:19px;color:#000;letter-spacing:0.4px;">C4</div>
<div style="position:absolute;left:340px;top:408px;width:53px;height:18px;background:#FFFF99;"></div>
<div style="position:absolute;left:340px;top:409px;width:52px;height:19px;white-space:nowrap;font-family:'Liberation Sans',sans-serif;font-weight:bold;font-size:14px;line-height:19px;color:#000;letter-spacing:0.4px;text-align:right;">36,75</div>
<div style="position:absolute;left:394px;top:408px;width:51px;height:18px;background:#CCFFCC;"></div>
<div style="position:absolute;left:394px;top:409px;width:50px;height:19px;white-space:nowrap;font-family:'Liberation Sans',sans-serif;font-weight:bold;font-size:14px;line-height:19px;color:#000;letter-spacing:0.4px;text-align:right;">1,20</div>
<div style="position:absolute;left:438px;top:408px;width:0;height:0;border-left:7px solid transparent;border-top:7px solid #BC1414;"></div>
<div style="position:absolute;left:288px;top:427px;width:51px;height:18px;background:#FF99CC;"></div>
<div style="position:absolute;left:290px;top:428px;height:19px;white-space:nowrap;font-family:'Liberation Sans',sans-serif;font-weight:bold;font-size:14px;line-height:19px;color:#000;letter-spacing:0.4px;">C5</div>
<div style="position:absolute;left:340px;top:427px;width:53px;height:18px;background:#FFFF99;"></div>
<svg style="position:absolute;left:340px;top:427px" width="53" height="18"><defs><pattern id="dp340_427" width="4" height="2" patternUnits="userSpaceOnUse"><rect x="0" y="0" width="1" height="1" fill="#1a1a1a"/><rect x="2" y="1" width="1" height="1" fill="#1a1a1a"/></pattern></defs><rect x="0" y="0" width="53" height="18" fill="url(#dp340_427)"/></svg>
<div style="position:absolute;left:340px;top:428px;width:52px;height:19px;white-space:nowrap;font-family:'Liberation Sans',sans-serif;font-weight:bold;font-size:14px;line-height:19px;color:#000;letter-spacing:0.4px;text-align:right;color:#FFFF99;">4,00</div>
<div style="position:absolute;left:394px;top:427px;width:51px;height:18px;background:#FFFF99;"></div>
<svg style="position:absolute;left:394px;top:427px" width="51" height="18"><defs><pattern id="dp394_427" width="4" height="2" patternUnits="userSpaceOnUse"><rect x="0" y="0" width="1" height="1" fill="#1a1a1a"/><rect x="2" y="1" width="1" height="1" fill="#1a1a1a"/></pattern></defs><rect x="0" y="0" width="51" height="18" fill="url(#dp394_427)"/></svg>
<div style="position:absolute;left:394px;top:428px;width:50px;height:19px;white-space:nowrap;font-family:'Liberation Sans',sans-serif;font-weight:bold;font-size:14px;line-height:19px;color:#000;letter-spacing:0.4px;text-align:right;color:#FFFF99;">1,10</div>
<div style="position:absolute;left:288px;top:446px;width:51px;height:18px;background:#FF99CC;"></div>
<div style="position:absolute;left:290px;top:447px;height:19px;white-space:nowrap;font-family:'Liberation Sans',sans-serif;font-weight:bold;font-size:14px;line-height:19px;color:#000;letter-spacing:0.4px;">C6</div>
<div style="position:absolute;left:340px;top:446px;width:53px;height:18px;background:#FFFF99;"></div>
<div style="position:absolute;left:340px;top:447px;width:52px;height:19px;white-space:nowrap;font-family:'Liberation Sans',sans-serif;font-weight:bold;font-size:14px;line-height:19px;color:#000;letter-spacing:0.4px;text-align:right;">0,21</div>
<div style="position:absolute;left:394px;top:446px;width:51px;height:18px;background:#FFFF99;"></div>
<div style="position:absolute;left:394px;top:447px;width:50px;height:19px;white-space:nowrap;font-family:'Liberation Sans',sans-serif;font-weight:bold;font-size:14px;line-height:19px;color:#000;letter-spacing:0.4px;text-align:right;">3,43</div>
<div style="position:absolute;left:288px;top:465px;width:51px;height:18px;background:#FF99CC;"></div>
<div style="position:absolute;left:290px;top:466px;height:19px;white-space:nowrap;font-family:'Liberation Sans',sans-serif;font-weight:bold;font-size:14px;line-height:19px;color:#000;letter-spacing:0.4px;">C7</div>
<div style="position:absolute;left:340px;top:465px;width:53px;height:18px;background:#FFFF99;"></div>
<div style="position:absolute;left:340px;top:466px;width:52px;height:19px;white-space:nowrap;font-family:'Liberation Sans',sans-serif;font-weight:bold;font-size:14px;line-height:19px;color:#000;letter-spacing:0.4px;text-align:right;">26,66</div>
<div style="position:absolute;left:394px;top:465px;width:51px;height:18px;background:#FFFF99;"></div>
<div style="position:absolute;left:394px;top:466px;width:50px;height:19px;white-space:nowrap;font-family:'Liberation Sans',sans-serif;font-weight:bold;font-size:14px;line-height:19px;color:#000;letter-spacing:0.4px;text-align:right;">4,82</div>
<div style="position:absolute;left:288px;top:484px;width:51px;height:18px;background:#FF99CC;"></div>
<div style="position:absolute;left:290px;top:485px;height:19px;white-space:nowrap;font-family:'Liberation Sans',sans-serif;font-weight:bold;font-size:14px;line-height:19px;color:#000;letter-spacing:0.4px;">C8</div>
<div style="position:absolute;left:340px;top:484px;width:53px;height:18px;background:#FFFF99;"></div>
<div style="position:absolute;left:340px;top:485px;width:52px;height:19px;white-space:nowrap;font-family:'Liberation Sans',sans-serif;font-weight:bold;font-size:14px;line-height:19px;color:#000;letter-spacing:0.4px;text-align:right;">27,15</div>
<div style="position:absolute;left:394px;top:484px;width:51px;height:18px;background:#FFFF99;"></div>
<div style="position:absolute;left:394px;top:485px;width:50px;height:19px;white-space:nowrap;font-family:'Liberation Sans',sans-serif;font-weight:bold;font-size:14px;line-height:19px;color:#000;letter-spacing:0.4px;text-align:right;">4,84</div>
<div style="position:absolute;left:397px;top:411px;width:9px;height:9px;background:#fff;border:1px solid #bbb;"></div>
<svg style="position:absolute;left:397px;top:411px" width="11" height="11"><path d="M2.5 5.5 L4.5 7.5 L8.5 2.5" stroke="#000" stroke-width="1.6" fill="none"/></svg>
<div style="position:absolute;left:1029px;top:120px;width:78px;height:34px;background:#C8C8C8;border-top:2px solid #FFFFFF;border-left:2px solid #FFFFFF;border-right:3px solid #6A6A6A;border-bottom:3px solid #6A6A6A;"></div>
<div style="position:absolute;left:1029px;top:120px;width:83px;height:39px;line-height:39px;text-align:center;font-family:'Liberation Sans',sans-serif;font-weight:bold;font-size:16px;color:#1010C8;letter-spacing:0px;white-space:nowrap;">Plot Win</div>
<div style="position:absolute;left:1029px;top:164px;width:79px;height:33px;background:#C8C8C8;border-top:2px solid #FFFFFF;border-left:2px solid #FFFFFF;border-right:3px solid #6A6A6A;border-bottom:3px solid #6A6A6A;"></div>
<div style="position:absolute;left:1029px;top:164px;width:84px;height:38px;line-height:38px;text-align:center;font-family:'Liberation Sans',sans-serif;font-weight:bold;font-size:16px;color:#1010C8;letter-spacing:0px;white-space:nowrap;">Über...</div>
<div style="position:absolute;left:1029px;top:207px;width:79px;height:32px;background:#C8C8C8;border-top:2px solid #FFFFFF;border-left:2px solid #FFFFFF;border-right:3px solid #6A6A6A;border-bottom:3px solid #6A6A6A;"></div>
<div style="position:absolute;left:1029px;top:207px;width:84px;height:37px;line-height:37px;text-align:center;font-family:'Liberation Sans',sans-serif;font-weight:bold;font-size:16px;color:#404040;letter-spacing:0px;white-space:nowrap;">Optionen</div>
<div style="position:absolute;left:1029px;top:250px;width:77px;height:32px;background:#C8C8C8;border-top:2px solid #FFFFFF;border-left:2px solid #FFFFFF;border-right:3px solid #6A6A6A;border-bottom:3px solid #6A6A6A;"></div>
<div style="position:absolute;left:1029px;top:250px;width:82px;height:37px;line-height:37px;text-align:center;font-family:'Liberation Sans',sans-serif;font-weight:bold;font-size:15px;color:#A8A8A8;letter-spacing:0px;white-space:nowrap;text-shadow:1px 1px 0 #fff;">MSV-rpm</div>
<div style="position:absolute;left:1029px;top:323px;width:77px;height:31px;background:#E2E2E2;border-top:2px solid #FFFFFF;border-left:2px solid #FFFFFF;border-right:3px solid #6A6A6A;border-bottom:3px solid #6A6A6A;"></div>
<div style="position:absolute;left:1029px;top:323px;width:82px;height:36px;line-height:36px;text-align:center;font-family:'Liberation Sans',sans-serif;font-weight:bold;font-size:16px;color:#9A9A9A;letter-spacing:0px;white-space:nowrap;">Kugel</div>
<div style="position:absolute;left:1029px;top:365px;width:77px;height:31px;background:#E2E2E2;border-top:2px solid #FFFFFF;border-left:2px solid #FFFFFF;border-right:3px solid #6A6A6A;border-bottom:3px solid #6A6A6A;"></div>
<div style="position:absolute;left:1029px;top:365px;width:82px;height:36px;line-height:36px;text-align:center;font-family:'Liberation Sans',sans-serif;font-weight:bold;font-size:16px;color:#9A9A9A;letter-spacing:0px;white-space:nowrap;">1-Stufe</div>
<div style="position:absolute;left:1029px;top:406px;width:77px;height:31px;background:#F8F490;border-top:2px solid #FFFFFF;border-left:2px solid #FFFFFF;border-right:3px solid #6A6A6A;border-bottom:3px solid #6A6A6A;"></div>
<div style="position:absolute;left:1029px;top:406px;width:82px;height:36px;line-height:36px;text-align:center;font-family:'Liberation Sans',sans-serif;font-weight:bold;font-size:16px;color:#000;letter-spacing:0px;white-space:nowrap;">2-Stufe</div>
<div style="position:absolute;left:1029px;top:448px;width:77px;height:31px;background:#E2E2E2;border-top:2px solid #FFFFFF;border-left:2px solid #FFFFFF;border-right:3px solid #6A6A6A;border-bottom:3px solid #6A6A6A;"></div>
<div style="position:absolute;left:1029px;top:448px;width:82px;height:36px;line-height:36px;text-align:center;font-family:'Liberation Sans',sans-serif;font-weight:bold;font-size:16px;color:#9A9A9A;letter-spacing:0px;white-space:nowrap;">3-Stufe</div>
<div style="position:absolute;left:1028px;top:502px;width:85px;height:115px;background:#000;"></div>
<div style="position:absolute;left:1029px;top:503px;width:83px;height:37px;background:#CCFFFF;"></div>
<div style="position:absolute;left:1029px;top:505px;width:80px;white-space:nowrap;font-family:'Liberation Sans',sans-serif;font-weight:bold;font-size:14px;line-height:16px;text-align:center;">Achse</div>
<div style="position:absolute;left:1029px;top:524px;width:80px;white-space:nowrap;font-family:'Liberation Sans',sans-serif;font-weight:bold;font-size:14px;line-height:16px;text-align:center;">Bereich</div>
<div style="position:absolute;left:1106px;top:503px;width:0;height:0;border-left:6px solid transparent;border-top:6px solid #BC1414;"></div>
<div style="position:absolute;left:1095px;top:513px;width:9px;height:9px;background:#fff;border:1px solid #bbb;"></div>
<svg style="position:absolute;left:1095px;top:513px" width="11" height="11"><path d="M2.5 5.5 L4.5 7.5 L8.5 2.5" stroke="#000" stroke-width="1.6" fill="none"/></svg>
<div style="position:absolute;left:1029px;top:541px;width:83px;height:18px;background:#FF99CC;"></div>
<div style="position:absolute;left:1029px;top:541px;width:83px;white-space:nowrap;font-family:'Liberation Sans',sans-serif;font-weight:bold;font-size:14px;line-height:19px;color:#000;letter-spacing:0.4px;text-align:center;">X</div>
<div style="position:absolute;left:1029px;top:560px;width:83px;height:18px;background:#CCFFCC;"></div>
<div style="position:absolute;left:1029px;top:560px;width:83px;white-space:nowrap;font-family:'Liberation Sans',sans-serif;font-weight:bold;font-size:14px;line-height:19px;color:#000;letter-spacing:0.4px;text-align:center;">50</div>
<div style="position:absolute;left:1095px;top:563px;width:9px;height:9px;background:#fff;border:1px solid #bbb;"></div>
<svg style="position:absolute;left:1095px;top:563px" width="11" height="11"><path d="M2.5 5.5 L4.5 7.5 L8.5 2.5" stroke="#000" stroke-width="1.6" fill="none"/></svg>
<div style="position:absolute;left:1029px;top:579px;width:45px;height:18px;background:#FF99CC;"></div>
<div style="position:absolute;left:1075px;top:579px;width:37px;height:18px;background:#FF99CC;"></div>
<div style="position:absolute;left:1042px;top:579px;width:40px;white-space:nowrap;font-family:'Liberation Sans',sans-serif;font-weight:bold;font-size:14px;line-height:19px;color:#000;letter-spacing:0.4px;">- Y</div>
<div style="position:absolute;left:1078px;top:579px;width:30px;white-space:nowrap;font-family:'Liberation Sans',sans-serif;font-weight:bold;font-size:14px;line-height:19px;color:#000;letter-spacing:0.4px;">Y</div>
<div style="position:absolute;left:1029px;top:598px;width:45px;height:18px;background:#FF0000;"></div>
<div style="position:absolute;left:1075px;top:598px;width:37px;height:18px;background:#FF0000;"></div>
<div style="position:absolute;left:1029px;top:598px;width:44px;white-space:nowrap;font-family:'Liberation Sans',sans-serif;font-weight:bold;font-size:14px;line-height:19px;color:#000;letter-spacing:0.4px;color:#500000;text-align:right;">30</div>
<div style="position:absolute;left:1075px;top:598px;width:36px;white-space:nowrap;font-family:'Liberation Sans',sans-serif;font-weight:bold;font-size:14px;line-height:19px;color:#000;letter-spacing:0.4px;color:#500000;text-align:right;">40</div>
<div style="position:absolute;left:1029px;top:625px;width:80px;height:32px;background:#E2E2E2;border-top:2px solid #FFFFFF;border-left:2px solid #FFFFFF;border-right:3px solid #6A6A6A;border-bottom:3px solid #6A6A6A;"></div>
<div style="position:absolute;left:1029px;top:625px;width:85px;height:37px;line-height:37px;text-align:center;font-family:'Liberation Sans',sans-serif;font-weight:bold;font-size:15px;color:#444;letter-spacing:0px;white-space:nowrap;">Schirm</div>
<div style="position:absolute;left:1031px;top:668px;width:78px;height:29px;background:#E4E4E4;border-top:2px solid #FFFFFF;border-left:2px solid #FFFFFF;border-right:3px solid #6A6A6A;border-bottom:3px solid #6A6A6A;"></div>
<div style="position:absolute;left:1031px;top:668px;width:83px;height:34px;line-height:34px;text-align:center;font-family:'Liberation Sans',sans-serif;font-weight:bold;font-size:20px;color:#444;letter-spacing:0px;white-space:nowrap;">1:1</div>
<div style="position:absolute;left:1031px;top:708px;width:79px;height:23px;background:#E4E4E4;border-top:1px solid #fff;border-left:1px solid #fff;border-right:2px solid #000;border-bottom:2px solid #000;"></div>
<div style="position:absolute;left:1031px;top:734px;width:79px;height:23px;background:#E4E4E4;border-top:1px solid #fff;border-left:1px solid #fff;border-right:2px solid #000;border-bottom:2px solid #000;"></div>
<div style="position:absolute;left:1066px;top:717px;width:0;height:0;border-left:6px solid transparent;border-right:6px solid transparent;border-bottom:6px solid #606060;"></div>
<div style="position:absolute;left:1066px;top:744px;width:0;height:0;border-left:6px solid transparent;border-right:6px solid transparent;border-top:6px solid #606060;"></div>
<div style="position:absolute;left:946px;top:766px;white-space:nowrap;font-family:'Liberation Sans',sans-serif;font-size:14px;line-height:16px;color:#111;letter-spacing:0.17px;">Copyright 2020 Ver. 2.6.1</div>
<div style="position:absolute;left:36px;top:517px;width:388px;height:223px;background:#fff;border:2px solid #1a1a1a;border-radius:14px;"></div>
<svg style="position:absolute;left:0;top:0" width="1142" height="785">
<line x1="65.5" y1="555.1" x2="65.5" y2="709.0" stroke="#000" stroke-width="1.3"/>
<line x1="114.5" y1="555.1" x2="114.5" y2="709.0" stroke="#000" stroke-width="1.3"/>
<line x1="164.5" y1="555.1" x2="164.5" y2="709.0" stroke="#000" stroke-width="1.3"/>
<line x1="213.5" y1="555.1" x2="213.5" y2="709.0" stroke="#000" stroke-width="1.3"/>
<line x1="263.5" y1="555.1" x2="263.5" y2="709.0" stroke="#000" stroke-width="1.3"/>
<line x1="312.5" y1="555.1" x2="312.5" y2="709.0" stroke="#000" stroke-width="1.3"/>
<line x1="361.5" y1="555.1" x2="361.5" y2="709.0" stroke="#000" stroke-width="1.3"/>
<line x1="411.5" y1="555.1" x2="411.5" y2="709.0" stroke="#000" stroke-width="1.3"/>
<line x1="65.0" y1="709.5" x2="410.8" y2="709.5" stroke="#000" stroke-width="1.3"/>
<line x1="65.0" y1="683.5" x2="410.8" y2="683.5" stroke="#000" stroke-width="1.3"/>
<line x1="65.0" y1="658.5" x2="410.8" y2="658.5" stroke="#000" stroke-width="1.3"/>
<line x1="65.0" y1="632.5" x2="410.8" y2="632.5" stroke="#000" stroke-width="1.3"/>
<line x1="65.0" y1="606.5" x2="410.8" y2="606.5" stroke="#000" stroke-width="1.3"/>
<line x1="65.0" y1="581.5" x2="410.8" y2="581.5" stroke="#000" stroke-width="1.3"/>
<line x1="65.0" y1="555.5" x2="410.8" y2="555.5" stroke="#000" stroke-width="1.3"/>
<line x1="65.0" y1="709.0" x2="68.5" y2="709.0" stroke="#000" stroke-width="1"/>
<line x1="65.0" y1="703.9" x2="68.5" y2="703.9" stroke="#000" stroke-width="1"/>
<line x1="65.0" y1="698.7" x2="68.5" y2="698.7" stroke="#000" stroke-width="1"/>
<line x1="65.0" y1="693.6" x2="68.5" y2="693.6" stroke="#000" stroke-width="1"/>
<line x1="65.0" y1="688.5" x2="68.5" y2="688.5" stroke="#000" stroke-width="1"/>
<line x1="65.0" y1="683.4" x2="68.5" y2="683.4" stroke="#000" stroke-width="1"/>
<line x1="65.0" y1="678.2" x2="68.5" y2="678.2" stroke="#000" stroke-width="1"/>
<line x1="65.0" y1="673.1" x2="68.5" y2="673.1" stroke="#000" stroke-width="1"/>
<line x1="65.0" y1="668.0" x2="68.5" y2="668.0" stroke="#000" stroke-width="1"/>
<line x1="65.0" y1="662.8" x2="68.5" y2="662.8" stroke="#000" stroke-width="1"/>
<line x1="65.0" y1="657.7" x2="68.5" y2="657.7" stroke="#000" stroke-width="1"/>
<line x1="65.0" y1="652.6" x2="68.5" y2="652.6" stroke="#000" stroke-width="1"/>
<line x1="65.0" y1="647.4" x2="68.5" y2="647.4" stroke="#000" stroke-width="1"/>
<line x1="65.0" y1="642.3" x2="68.5" y2="642.3" stroke="#000" stroke-width="1"/>
<line x1="65.0" y1="637.2" x2="68.5" y2="637.2" stroke="#000" stroke-width="1"/>
<line x1="65.0" y1="632.0" x2="68.5" y2="632.0" stroke="#000" stroke-width="1"/>
<line x1="65.0" y1="626.9" x2="68.5" y2="626.9" stroke="#000" stroke-width="1"/>
<line x1="65.0" y1="621.8" x2="68.5" y2="621.8" stroke="#000" stroke-width="1"/>
<line x1="65.0" y1="616.7" x2="68.5" y2="616.7" stroke="#000" stroke-width="1"/>
<line x1="65.0" y1="611.5" x2="68.5" y2="611.5" stroke="#000" stroke-width="1"/>
<line x1="65.0" y1="606.4" x2="68.5" y2="606.4" stroke="#000" stroke-width="1"/>
<line x1="65.0" y1="601.3" x2="68.5" y2="601.3" stroke="#000" stroke-width="1"/>
<line x1="65.0" y1="596.1" x2="68.5" y2="596.1" stroke="#000" stroke-width="1"/>
<line x1="65.0" y1="591.0" x2="68.5" y2="591.0" stroke="#000" stroke-width="1"/>
<line x1="65.0" y1="585.9" x2="68.5" y2="585.9" stroke="#000" stroke-width="1"/>
<line x1="65.0" y1="580.8" x2="68.5" y2="580.8" stroke="#000" stroke-width="1"/>
<line x1="65.0" y1="575.6" x2="68.5" y2="575.6" stroke="#000" stroke-width="1"/>
<line x1="65.0" y1="570.5" x2="68.5" y2="570.5" stroke="#000" stroke-width="1"/>
<line x1="65.0" y1="565.4" x2="68.5" y2="565.4" stroke="#000" stroke-width="1"/>
<line x1="65.0" y1="560.2" x2="68.5" y2="560.2" stroke="#000" stroke-width="1"/>
<line x1="65.0" y1="555.1" x2="68.5" y2="555.1" stroke="#000" stroke-width="1"/>
<line x1="65.0" y1="709.0" x2="65.0" y2="705.5" stroke="#000" stroke-width="1"/>
<line x1="74.9" y1="709.0" x2="74.9" y2="705.5" stroke="#000" stroke-width="1"/>
<line x1="84.8" y1="709.0" x2="84.8" y2="705.5" stroke="#000" stroke-width="1"/>
<line x1="94.6" y1="709.0" x2="94.6" y2="705.5" stroke="#000" stroke-width="1"/>
<line x1="104.5" y1="709.0" x2="104.5" y2="705.5" stroke="#000" stroke-width="1"/>
<line x1="114.4" y1="709.0" x2="114.4" y2="705.5" stroke="#000" stroke-width="1"/>
<line x1="124.3" y1="709.0" x2="124.3" y2="705.5" stroke="#000" stroke-width="1"/>
<line x1="134.2" y1="709.0" x2="134.2" y2="705.5" stroke="#000" stroke-width="1"/>
<line x1="144.0" y1="709.0" x2="144.0" y2="705.5" stroke="#000" stroke-width="1"/>
<line x1="153.9" y1="709.0" x2="153.9" y2="705.5" stroke="#000" stroke-width="1"/>
<line x1="163.8" y1="709.0" x2="163.8" y2="705.5" stroke="#000" stroke-width="1"/>
<line x1="173.7" y1="709.0" x2="173.7" y2="705.5" stroke="#000" stroke-width="1"/>
<line x1="183.6" y1="709.0" x2="183.6" y2="705.5" stroke="#000" stroke-width="1"/>
<line x1="193.4" y1="709.0" x2="193.4" y2="705.5" stroke="#000" stroke-width="1"/>
<line x1="203.3" y1="709.0" x2="203.3" y2="705.5" stroke="#000" stroke-width="1"/>
<line x1="213.2" y1="709.0" x2="213.2" y2="705.5" stroke="#000" stroke-width="1"/>
<line x1="223.1" y1="709.0" x2="223.1" y2="705.5" stroke="#000" stroke-width="1"/>
<line x1="233.0" y1="709.0" x2="233.0" y2="705.5" stroke="#000" stroke-width="1"/>
<line x1="242.8" y1="709.0" x2="242.8" y2="705.5" stroke="#000" stroke-width="1"/>
<line x1="252.7" y1="709.0" x2="252.7" y2="705.5" stroke="#000" stroke-width="1"/>
<line x1="262.6" y1="709.0" x2="262.6" y2="705.5" stroke="#000" stroke-width="1"/>
<line x1="272.5" y1="709.0" x2="272.5" y2="705.5" stroke="#000" stroke-width="1"/>
<line x1="282.4" y1="709.0" x2="282.4" y2="705.5" stroke="#000" stroke-width="1"/>
<line x1="292.2" y1="709.0" x2="292.2" y2="705.5" stroke="#000" stroke-width="1"/>
<line x1="302.1" y1="709.0" x2="302.1" y2="705.5" stroke="#000" stroke-width="1"/>
<line x1="312.0" y1="709.0" x2="312.0" y2="705.5" stroke="#000" stroke-width="1"/>
<line x1="321.9" y1="709.0" x2="321.9" y2="705.5" stroke="#000" stroke-width="1"/>
<line x1="331.8" y1="709.0" x2="331.8" y2="705.5" stroke="#000" stroke-width="1"/>
<line x1="341.6" y1="709.0" x2="341.6" y2="705.5" stroke="#000" stroke-width="1"/>
<line x1="351.5" y1="709.0" x2="351.5" y2="705.5" stroke="#000" stroke-width="1"/>
<line x1="361.4" y1="709.0" x2="361.4" y2="705.5" stroke="#000" stroke-width="1"/>
<line x1="371.3" y1="709.0" x2="371.3" y2="705.5" stroke="#000" stroke-width="1"/>
<line x1="381.2" y1="709.0" x2="381.2" y2="705.5" stroke="#000" stroke-width="1"/>
<line x1="391.0" y1="709.0" x2="391.0" y2="705.5" stroke="#000" stroke-width="1"/>
<line x1="400.9" y1="709.0" x2="400.9" y2="705.5" stroke="#000" stroke-width="1"/>
<line x1="410.8" y1="709.0" x2="410.8" y2="705.5" stroke="#000" stroke-width="1"/>
<text x="55.5" y="713.3" text-anchor="end" font-family="Liberation Sans, sans-serif" font-size="12.5" fill="#111">0</text>
<line x1="61.0" y1="709.5" x2="65.0" y2="709.5" stroke="#000" stroke-width="1.3"/>
<text x="55.5" y="687.6" text-anchor="end" font-family="Liberation Sans, sans-serif" font-size="12.5" fill="#111">5</text>
<line x1="61.0" y1="683.5" x2="65.0" y2="683.5" stroke="#000" stroke-width="1.3"/>
<text x="55.5" y="662.0" text-anchor="end" font-family="Liberation Sans, sans-serif" font-size="12.5" fill="#111">10</text>
<line x1="61.0" y1="658.5" x2="65.0" y2="658.5" stroke="#000" stroke-width="1.3"/>
<text x="55.5" y="636.3" text-anchor="end" font-family="Liberation Sans, sans-serif" font-size="12.5" fill="#111">15</text>
<line x1="61.0" y1="632.5" x2="65.0" y2="632.5" stroke="#000" stroke-width="1.3"/>
<text x="55.5" y="610.7" text-anchor="end" font-family="Liberation Sans, sans-serif" font-size="12.5" fill="#111">20</text>
<line x1="61.0" y1="606.5" x2="65.0" y2="606.5" stroke="#000" stroke-width="1.3"/>
<text x="55.5" y="585.0" text-anchor="end" font-family="Liberation Sans, sans-serif" font-size="12.5" fill="#111">25</text>
<line x1="61.0" y1="581.5" x2="65.0" y2="581.5" stroke="#000" stroke-width="1.3"/>
<text x="55.5" y="559.4" text-anchor="end" font-family="Liberation Sans, sans-serif" font-size="12.5" fill="#111">30</text>
<line x1="61.0" y1="555.5" x2="65.0" y2="555.5" stroke="#000" stroke-width="1.3"/>
<text x="65.3" y="727.5" text-anchor="middle" font-family="Liberation Sans, sans-serif" font-size="12.5" fill="#111">0</text>
<text x="114.7" y="727.5" text-anchor="middle" font-family="Liberation Sans, sans-serif" font-size="12.5" fill="#111">5</text>
<text x="164.1" y="727.5" text-anchor="middle" font-family="Liberation Sans, sans-serif" font-size="12.5" fill="#111">10</text>
<text x="213.5" y="727.5" text-anchor="middle" font-family="Liberation Sans, sans-serif" font-size="12.5" fill="#111">15</text>
<text x="262.9" y="727.5" text-anchor="middle" font-family="Liberation Sans, sans-serif" font-size="12.5" fill="#111">20</text>
<text x="312.3" y="727.5" text-anchor="middle" font-family="Liberation Sans, sans-serif" font-size="12.5" fill="#111">25</text>
<text x="411.1" y="727.5" text-anchor="middle" font-family="Liberation Sans, sans-serif" font-size="12.5" fill="#111">35</text>
<line x1="65.5" y1="709.0" x2="65.5" y2="713.0" stroke="#000" stroke-width="1.3"/>
<line x1="114.5" y1="709.0" x2="114.5" y2="713.0" stroke="#000" stroke-width="1.3"/>
<line x1="164.5" y1="709.0" x2="164.5" y2="713.0" stroke="#000" stroke-width="1.3"/>
<line x1="213.5" y1="709.0" x2="213.5" y2="713.0" stroke="#000" stroke-width="1.3"/>
<line x1="263.5" y1="709.0" x2="263.5" y2="713.0" stroke="#000" stroke-width="1.3"/>
<line x1="312.5" y1="709.0" x2="312.5" y2="713.0" stroke="#000" stroke-width="1.3"/>
<line x1="361.5" y1="709.0" x2="361.5" y2="713.0" stroke="#000" stroke-width="1.3"/>
<line x1="411.5" y1="709.0" x2="411.5" y2="713.0" stroke="#000" stroke-width="1.3"/>
<text x="357" y="727.5" font-family="Liberation Sans, sans-serif" font-size="12.5" fill="#111">3</text>
<rect x="360" y="716" width="4" height="14" fill="#fff"/>
<text x="363" y="727.5" font-family="Liberation Sans, sans-serif" font-size="12.5" font-weight="bold" fill="#111">° v.OT</text>
<line x1="59" y1="531" x2="86" y2="531" stroke="#CC33CC" stroke-width="3"/>
<text x="89.5" y="535" font-family="Liberation Sans, sans-serif" font-size="10" letter-spacing="0.2" fill="#111">Kolbengeschwindigkeit [m/s]</text>
<line x1="238" y1="531" x2="265" y2="531" stroke="#C0201A" stroke-width="3"/>
<text x="268" y="535" font-family="Liberation Sans, sans-serif" font-size="10" letter-spacing="0.2" fill="#111">Druck [bar]</text>
<line x1="59" y1="547" x2="86" y2="547" stroke="#1A1A8C" stroke-width="3"/>
<text x="89.5" y="551" font-family="Liberation Sans, sans-serif" font-size="10" letter-spacing="0.2" fill="#111">Quetschgeschw. [m/s]</text>
<polyline points="65.0,709.0 68.8,708.0 73.9,706.7 79.9,705.2 86.6,703.4 93.7,701.6 100.9,699.7 107.9,697.9 114.4,696.2 120.6,694.5 126.8,692.9 132.9,691.2 139.1,689.5 145.3,687.8 151.5,686.1 157.6,684.5 163.8,682.8 170.0,681.2 176.2,679.6 182.3,678.0 188.5,676.4 194.7,674.8 200.9,673.2 207.0,671.6 213.2,670.0 219.4,668.4 225.6,666.9 231.7,665.4 237.9,663.8 244.1,662.3 250.3,660.8 256.4,659.2 262.6,657.7 268.8,656.2 275.0,654.6 281.1,653.1 287.3,651.5 293.5,650.0 299.7,648.4 305.8,646.9 312.0,645.4 318.2,643.9 324.4,642.4 330.5,640.8 336.7,639.3 342.9,637.8 349.1,636.4 355.2,635.0 361.4,633.6 367.9,632.2 374.9,630.8 382.1,629.4 389.2,628.0 395.9,626.7 401.9,625.5 407.0,624.6 410.8,623.8" fill="none" stroke="#CC33CC" stroke-width="2.2" stroke-linejoin="round"/>
<polyline points="65.0,580.2 66.9,580.2 69.4,580.2 72.5,580.2 75.8,580.2 79.4,580.2 82.9,580.3 86.4,580.3 89.7,580.5 92.8,580.7 95.9,580.9 99.0,581.2 102.1,581.5 105.1,581.8 108.2,582.2 111.3,582.6 114.4,583.1 117.5,583.5 120.6,584.1 123.7,584.6 126.8,585.3 129.8,585.9 132.9,586.6 136.0,587.2 139.1,587.9 142.2,588.7 145.3,589.4 148.4,590.2 151.5,591.0 154.5,591.9 157.6,592.7 160.7,593.5 163.8,594.3 166.9,595.1 170.0,595.9 173.1,596.7 176.2,597.5 179.2,598.3 182.3,599.1 185.4,599.9 188.5,600.8 191.6,601.6 194.7,602.4 197.8,603.2 200.8,604.1 203.9,605.0 207.0,605.8 210.1,606.7 213.2,607.7 216.3,608.7 219.4,609.7 222.5,610.7 225.6,611.8 228.6,612.9 231.7,614.0 234.8,615.1 237.9,616.1 241.0,617.2 244.1,618.3 247.2,619.4 250.3,620.6 253.3,621.7 256.4,622.8 259.5,623.8 262.6,624.9 265.7,625.9 268.8,626.9 271.9,627.9 275.0,628.8 278.0,629.8 281.1,630.7 284.2,631.6 287.3,632.6 290.4,633.5 293.5,634.4 296.6,635.3 299.6,636.3 302.7,637.1 305.8,638.0 308.9,638.9 312.0,639.7 315.1,640.6 318.2,641.4 321.3,642.2 324.4,642.9 327.4,643.7 330.5,644.4 333.6,645.2 336.7,645.9 339.8,646.6 342.9,647.4 346.0,648.1 349.1,648.8 352.1,649.5 355.2,650.2 358.3,650.9 361.4,651.5 364.5,652.2 367.6,652.9 370.7,653.5 373.8,654.2 376.8,654.8 379.9,655.4 383.0,656.1 386.1,656.7 389.4,657.3 392.9,658.0 396.4,658.6 400.0,659.3 403.3,659.9 406.4,660.5 408.9,660.9 410.8,661.3" fill="none" stroke="#C0201A" stroke-width="2.4" stroke-linejoin="round"/>
<polyline points="65.0,709.0 65.5,708.8 66.1,708.5 66.8,708.2 67.6,707.8 68.4,707.4 69.3,707.0 70.1,706.5 70.9,705.9 71.7,705.3 72.4,704.6 73.2,703.9 74.0,703.2 74.7,702.4 75.4,701.5 76.2,700.7 76.9,699.8 77.5,698.9 78.1,698.0 78.7,697.1 79.2,696.2 79.8,695.2 80.4,694.1 81.0,692.9 81.8,691.6 82.6,690.1 83.5,688.5 84.5,686.9 85.4,685.1 86.5,683.3 87.5,681.4 88.6,679.3 89.7,677.2 90.8,675.0 91.9,672.6 93.0,670.1 94.2,667.6 95.4,664.9 96.7,662.2 98.1,659.5 99.6,656.7 101.2,653.7 102.9,650.6 104.8,647.4 106.7,644.1 108.6,640.9 110.6,637.8 112.5,634.8 114.4,632.0 116.3,629.5 118.1,627.1 120.0,624.8 121.8,622.7 123.7,620.6 125.5,618.7 127.4,616.9 129.2,615.1 131.0,613.5 132.8,612.0 134.6,610.6 136.3,609.3 138.1,608.1 140.0,607.0 142.0,605.9 144.0,604.9 146.3,603.9 148.7,603.0 151.3,602.1 153.9,601.4 156.5,600.6 159.1,600.0 161.5,599.4 163.8,599.0 165.9,598.6 167.9,598.2 169.7,598.0 171.5,597.8 173.3,597.7 175.0,597.7 176.8,597.7 178.6,597.7 180.4,597.7 182.2,597.8 184.0,598.0 185.7,598.2 187.5,598.4 189.4,598.7 191.4,599.1 193.4,599.5 195.6,599.9 197.9,600.4 200.3,601.0 202.7,601.6 205.2,602.2 207.8,602.9 210.5,603.7 213.2,604.6 216.1,605.6 219.0,606.6 222.1,607.8 225.2,609.0 228.4,610.2 231.6,611.5 234.8,612.8 237.9,614.1 241.0,615.4 244.1,616.8 247.2,618.2 250.3,619.7 253.3,621.1 256.4,622.6 259.5,624.0 262.6,625.4 265.7,626.7 268.8,628.0 271.9,629.3 275.0,630.6 278.0,631.9 281.1,633.2 284.2,634.4 287.3,635.6 290.4,636.9 293.5,638.1 296.6,639.2 299.6,640.4 302.7,641.6 305.8,642.7 308.9,643.8 312.0,644.9 315.1,645.9 318.2,646.9 321.3,647.9 324.4,648.9 327.4,649.8 330.5,650.8 333.6,651.7 336.7,652.6 339.8,653.4 342.9,654.3 346.0,655.0 349.1,655.8 352.1,656.6 355.2,657.4 358.3,658.2 361.4,659.0 364.5,659.8 367.6,660.7 370.7,661.6 373.8,662.5 376.8,663.3 379.9,664.2 383.0,665.1 386.1,665.9 389.4,666.8 392.9,667.6 396.4,668.5 400.0,669.4 403.3,670.2 406.4,671.0 408.9,671.6 410.8,672.1" fill="none" stroke="#1A1A8C" stroke-width="2.4" stroke-linejoin="round"/>
</svg>
<div style="position:absolute;left:23px;top:751px;white-space:nowrap;font-family:'Liberation Sans',sans-serif;font-size:13px;line-height:16px;color:#111;letter-spacing:0.25px;">Fenster vergrößerr</div>
<div style="position:absolute;left:143px;top:748px;width:233px;height:20px;background:#F4F4F4;"></div>
<div style="position:absolute;left:143px;top:748px;width:15px;height:18px;background:#F0F0F0;border-right:2px solid #8a8a8a;border-bottom:2px solid #8a8a8a;"></div>
<div style="position:absolute;left:149px;top:754px;width:0;height:0;border-top:4px solid transparent;border-bottom:4px solid transparent;border-right:4px solid #111;"></div>
<div style="position:absolute;left:359px;top:748px;width:15px;height:18px;background:#F0F0F0;border-right:2px solid #8a8a8a;border-bottom:2px solid #8a8a8a;"></div>
<div style="position:absolute;left:366px;top:754px;width:0;height:0;border-top:4px solid transparent;border-bottom:4px solid transparent;border-left:4px solid #111;"></div>
<div style="position:absolute;left:223px;top:748px;width:9px;height:18px;background:#EAEAEA;border-left:1px solid #fff;border-right:2px solid #8a8a8a;border-bottom:2px solid #8a8a8a;"></div>
<div style="position:absolute;left:396px;top:754px;white-space:nowrap;font-family:'Liberation Sans',sans-serif;font-size:14px;line-height:16px;color:#111;">100%</div>
<div style="position:absolute;left:448px;top:300px;width:564px;height:459px;border-radius:0 0 10px 10px;background:linear-gradient(to bottom,#C2C2C2 0%,#D2D2D2 30%,#E8E8E8 55%,#FAFAFA 85%,#FFFFFF 100%);"></div>
<svg style="position:absolute;left:0;top:0" width="1142" height="785">
<text x="460" y="332" font-family="Liberation Sans, sans-serif" font-size="14" fill="#222">Maßgeschneiderte Quetschwinkel</text>
<text x="460" y="349" font-family="Liberation Sans, sans-serif" font-size="14" fill="#222">(C4Y aktiviert&#160;&#160;)</text>
<text x="686" y="331" font-family="Liberation Sans, sans-serif" font-size="13" fill="#222">Y</text>
<text x="676" y="347" font-family="Liberation Sans, sans-serif" font-size="13" fill="#222">[mm]</text>
<text x="950" y="711" font-family="Liberation Sans, sans-serif" font-size="13" fill="#222">X&#160;&#160;[mm]</text>
<line x1="759" y1="325.5" x2="796" y2="325.5" stroke="#1818A8" stroke-width="1.2"/>
<line x1="759" y1="341.5" x2="796" y2="341.5" stroke="#E040E0" stroke-width="1" stroke-dasharray="3,2"/>
<line x1="759" y1="358.5" x2="796" y2="358.5" stroke="#E020E0" stroke-width="2.6"/>
<text x="799" y="329.5" font-family="Liberation Sans, sans-serif" font-size="12" fill="#111">Mathemat. optimiertes Quetschband</text>
<text x="799" y="346" font-family="Liberation Sans, sans-serif" font-size="12" fill="#111">Kolben bei max Quetschgeschw.</text>
<text x="799" y="363" font-family="Liberation Sans, sans-serif" font-size="12" fill="#111">Kolben in OT</text>
<line x1="465.5" y1="550.5" x2="989.0" y2="550.5" stroke="#000" stroke-width="1.2"/>
<line x1="727.5" y1="335.5" x2="727.5" y2="710.0" stroke="#000" stroke-width="1.2"/>
<line x1="465.5" y1="550.5" x2="465.5" y2="554.0" stroke="#000" stroke-width="1"/>
<line x1="470.8" y1="550.5" x2="470.8" y2="553.3" stroke="#000" stroke-width="1"/>
<line x1="476.0" y1="550.5" x2="476.0" y2="553.3" stroke="#000" stroke-width="1"/>
<line x1="481.3" y1="550.5" x2="481.3" y2="553.3" stroke="#000" stroke-width="1"/>
<line x1="486.5" y1="550.5" x2="486.5" y2="553.3" stroke="#000" stroke-width="1"/>
<line x1="491.7" y1="550.5" x2="491.7" y2="554.0" stroke="#000" stroke-width="1"/>
<line x1="497.0" y1="550.5" x2="497.0" y2="553.3" stroke="#000" stroke-width="1"/>
<line x1="502.2" y1="550.5" x2="502.2" y2="553.3" stroke="#000" stroke-width="1"/>
<line x1="507.4" y1="550.5" x2="507.4" y2="553.3" stroke="#000" stroke-width="1"/>
<line x1="512.7" y1="550.5" x2="512.7" y2="553.3" stroke="#000" stroke-width="1"/>
<line x1="517.9" y1="550.5" x2="517.9" y2="554.0" stroke="#000" stroke-width="1"/>
<line x1="523.1" y1="550.5" x2="523.1" y2="553.3" stroke="#000" stroke-width="1"/>
<line x1="528.4" y1="550.5" x2="528.4" y2="553.3" stroke="#000" stroke-width="1"/>
<line x1="533.6" y1="550.5" x2="533.6" y2="553.3" stroke="#000" stroke-width="1"/>
<line x1="538.8" y1="550.5" x2="538.8" y2="553.3" stroke="#000" stroke-width="1"/>
<line x1="544.1" y1="550.5" x2="544.1" y2="554.0" stroke="#000" stroke-width="1"/>
<line x1="549.3" y1="550.5" x2="549.3" y2="553.3" stroke="#000" stroke-width="1"/>
<line x1="554.5" y1="550.5" x2="554.5" y2="553.3" stroke="#000" stroke-width="1"/>
<line x1="559.8" y1="550.5" x2="559.8" y2="553.3" stroke="#000" stroke-width="1"/>
<line x1="565.0" y1="550.5" x2="565.0" y2="553.3" stroke="#000" stroke-width="1"/>
<line x1="570.2" y1="550.5" x2="570.2" y2="554.0" stroke="#000" stroke-width="1"/>
<line x1="575.5" y1="550.5" x2="575.5" y2="553.3" stroke="#000" stroke-width="1"/>
<line x1="580.7" y1="550.5" x2="580.7" y2="553.3" stroke="#000" stroke-width="1"/>
<line x1="586.0" y1="550.5" x2="586.0" y2="553.3" stroke="#000" stroke-width="1"/>
<line x1="591.2" y1="550.5" x2="591.2" y2="553.3" stroke="#000" stroke-width="1"/>
<line x1="596.4" y1="550.5" x2="596.4" y2="554.0" stroke="#000" stroke-width="1"/>
<line x1="601.7" y1="550.5" x2="601.7" y2="553.3" stroke="#000" stroke-width="1"/>
<line x1="606.9" y1="550.5" x2="606.9" y2="553.3" stroke="#000" stroke-width="1"/>
<line x1="612.1" y1="550.5" x2="612.1" y2="553.3" stroke="#000" stroke-width="1"/>
<line x1="617.4" y1="550.5" x2="617.4" y2="553.3" stroke="#000" stroke-width="1"/>
<line x1="622.6" y1="550.5" x2="622.6" y2="554.0" stroke="#000" stroke-width="1"/>
<line x1="627.8" y1="550.5" x2="627.8" y2="553.3" stroke="#000" stroke-width="1"/>
<line x1="633.1" y1="550.5" x2="633.1" y2="553.3" stroke="#000" stroke-width="1"/>
<line x1="638.3" y1="550.5" x2="638.3" y2="553.3" stroke="#000" stroke-width="1"/>
<line x1="643.5" y1="550.5" x2="643.5" y2="553.3" stroke="#000" stroke-width="1"/>
<line x1="648.8" y1="550.5" x2="648.8" y2="554.0" stroke="#000" stroke-width="1"/>
<line x1="654.0" y1="550.5" x2="654.0" y2="553.3" stroke="#000" stroke-width="1"/>
<line x1="659.2" y1="550.5" x2="659.2" y2="553.3" stroke="#000" stroke-width="1"/>
<line x1="664.5" y1="550.5" x2="664.5" y2="553.3" stroke="#000" stroke-width="1"/>
<line x1="669.7" y1="550.5" x2="669.7" y2="553.3" stroke="#000" stroke-width="1"/>
<line x1="674.9" y1="550.5" x2="674.9" y2="554.0" stroke="#000" stroke-width="1"/>
<line x1="680.2" y1="550.5" x2="680.2" y2="553.3" stroke="#000" stroke-width="1"/>
<line x1="685.4" y1="550.5" x2="685.4" y2="553.3" stroke="#000" stroke-width="1"/>
<line x1="690.7" y1="550.5" x2="690.7" y2="553.3" stroke="#000" stroke-width="1"/>
<line x1="695.9" y1="550.5" x2="695.9" y2="553.3" stroke="#000" stroke-width="1"/>
<line x1="701.1" y1="550.5" x2="701.1" y2="554.0" stroke="#000" stroke-width="1"/>
<line x1="706.4" y1="550.5" x2="706.4" y2="553.3" stroke="#000" stroke-width="1"/>
<line x1="711.6" y1="550.5" x2="711.6" y2="553.3" stroke="#000" stroke-width="1"/>
<line x1="716.8" y1="550.5" x2="716.8" y2="553.3" stroke="#000" stroke-width="1"/>
<line x1="722.1" y1="550.5" x2="722.1" y2="553.3" stroke="#000" stroke-width="1"/>
<line x1="727.3" y1="550.5" x2="727.3" y2="554.0" stroke="#000" stroke-width="1"/>
<line x1="732.5" y1="550.5" x2="732.5" y2="553.3" stroke="#000" stroke-width="1"/>
<line x1="737.8" y1="550.5" x2="737.8" y2="553.3" stroke="#000" stroke-width="1"/>
<line x1="743.0" y1="550.5" x2="743.0" y2="553.3" stroke="#000" stroke-width="1"/>
<line x1="748.2" y1="550.5" x2="748.2" y2="553.3" stroke="#000" stroke-width="1"/>
<line x1="753.5" y1="550.5" x2="753.5" y2="554.0" stroke="#000" stroke-width="1"/>
<line x1="758.7" y1="550.5" x2="758.7" y2="553.3" stroke="#000" stroke-width="1"/>
<line x1="763.9" y1="550.5" x2="763.9" y2="553.3" stroke="#000" stroke-width="1"/>
<line x1="769.2" y1="550.5" x2="769.2" y2="553.3" stroke="#000" stroke-width="1"/>
<line x1="774.4" y1="550.5" x2="774.4" y2="553.3" stroke="#000" stroke-width="1"/>
<line x1="779.6" y1="550.5" x2="779.6" y2="554.0" stroke="#000" stroke-width="1"/>
<line x1="784.9" y1="550.5" x2="784.9" y2="553.3" stroke="#000" stroke-width="1"/>
<line x1="790.1" y1="550.5" x2="790.1" y2="553.3" stroke="#000" stroke-width="1"/>
<line x1="795.4" y1="550.5" x2="795.4" y2="553.3" stroke="#000" stroke-width="1"/>
<line x1="800.6" y1="550.5" x2="800.6" y2="553.3" stroke="#000" stroke-width="1"/>
<line x1="805.8" y1="550.5" x2="805.8" y2="554.0" stroke="#000" stroke-width="1"/>
<line x1="811.1" y1="550.5" x2="811.1" y2="553.3" stroke="#000" stroke-width="1"/>
<line x1="816.3" y1="550.5" x2="816.3" y2="553.3" stroke="#000" stroke-width="1"/>
<line x1="821.5" y1="550.5" x2="821.5" y2="553.3" stroke="#000" stroke-width="1"/>
<line x1="826.8" y1="550.5" x2="826.8" y2="553.3" stroke="#000" stroke-width="1"/>
<line x1="832.0" y1="550.5" x2="832.0" y2="554.0" stroke="#000" stroke-width="1"/>
<line x1="837.2" y1="550.5" x2="837.2" y2="553.3" stroke="#000" stroke-width="1"/>
<line x1="842.5" y1="550.5" x2="842.5" y2="553.3" stroke="#000" stroke-width="1"/>
<line x1="847.7" y1="550.5" x2="847.7" y2="553.3" stroke="#000" stroke-width="1"/>
<line x1="852.9" y1="550.5" x2="852.9" y2="553.3" stroke="#000" stroke-width="1"/>
<line x1="858.2" y1="550.5" x2="858.2" y2="554.0" stroke="#000" stroke-width="1"/>
<line x1="863.4" y1="550.5" x2="863.4" y2="553.3" stroke="#000" stroke-width="1"/>
<line x1="868.6" y1="550.5" x2="868.6" y2="553.3" stroke="#000" stroke-width="1"/>
<line x1="873.9" y1="550.5" x2="873.9" y2="553.3" stroke="#000" stroke-width="1"/>
<line x1="879.1" y1="550.5" x2="879.1" y2="553.3" stroke="#000" stroke-width="1"/>
<line x1="884.3" y1="550.5" x2="884.3" y2="554.0" stroke="#000" stroke-width="1"/>
<line x1="889.6" y1="550.5" x2="889.6" y2="553.3" stroke="#000" stroke-width="1"/>
<line x1="894.8" y1="550.5" x2="894.8" y2="553.3" stroke="#000" stroke-width="1"/>
<line x1="900.1" y1="550.5" x2="900.1" y2="553.3" stroke="#000" stroke-width="1"/>
<line x1="905.3" y1="550.5" x2="905.3" y2="553.3" stroke="#000" stroke-width="1"/>
<line x1="910.5" y1="550.5" x2="910.5" y2="554.0" stroke="#000" stroke-width="1"/>
<line x1="915.8" y1="550.5" x2="915.8" y2="553.3" stroke="#000" stroke-width="1"/>
<line x1="921.0" y1="550.5" x2="921.0" y2="553.3" stroke="#000" stroke-width="1"/>
<line x1="926.2" y1="550.5" x2="926.2" y2="553.3" stroke="#000" stroke-width="1"/>
<line x1="931.5" y1="550.5" x2="931.5" y2="553.3" stroke="#000" stroke-width="1"/>
<line x1="936.7" y1="550.5" x2="936.7" y2="554.0" stroke="#000" stroke-width="1"/>
<line x1="941.9" y1="550.5" x2="941.9" y2="553.3" stroke="#000" stroke-width="1"/>
<line x1="947.2" y1="550.5" x2="947.2" y2="553.3" stroke="#000" stroke-width="1"/>
<line x1="952.4" y1="550.5" x2="952.4" y2="553.3" stroke="#000" stroke-width="1"/>
<line x1="957.6" y1="550.5" x2="957.6" y2="553.3" stroke="#000" stroke-width="1"/>
<line x1="962.9" y1="550.5" x2="962.9" y2="554.0" stroke="#000" stroke-width="1"/>
<line x1="968.1" y1="550.5" x2="968.1" y2="553.3" stroke="#000" stroke-width="1"/>
<line x1="973.3" y1="550.5" x2="973.3" y2="553.3" stroke="#000" stroke-width="1"/>
<line x1="978.6" y1="550.5" x2="978.6" y2="553.3" stroke="#000" stroke-width="1"/>
<line x1="983.8" y1="550.5" x2="983.8" y2="553.3" stroke="#000" stroke-width="1"/>
<line x1="989.0" y1="550.5" x2="989.0" y2="554.0" stroke="#000" stroke-width="1"/>
<line x1="723.5" y1="710.0" x2="727.5" y2="710.0" stroke="#000" stroke-width="1.2"/>
<line x1="724.5" y1="704.6" x2="727.5" y2="704.6" stroke="#000" stroke-width="1.2"/>
<line x1="724.5" y1="699.3" x2="727.5" y2="699.3" stroke="#000" stroke-width="1.2"/>
<line x1="724.5" y1="694.0" x2="727.5" y2="694.0" stroke="#000" stroke-width="1.2"/>
<line x1="724.5" y1="688.6" x2="727.5" y2="688.6" stroke="#000" stroke-width="1.2"/>
<line x1="723.5" y1="683.2" x2="727.5" y2="683.2" stroke="#000" stroke-width="1.2"/>
<line x1="724.5" y1="677.9" x2="727.5" y2="677.9" stroke="#000" stroke-width="1.2"/>
<line x1="724.5" y1="672.5" x2="727.5" y2="672.5" stroke="#000" stroke-width="1.2"/>
<line x1="724.5" y1="667.2" x2="727.5" y2="667.2" stroke="#000" stroke-width="1.2"/>
<line x1="724.5" y1="661.9" x2="727.5" y2="661.9" stroke="#000" stroke-width="1.2"/>
<line x1="723.5" y1="656.5" x2="727.5" y2="656.5" stroke="#000" stroke-width="1.2"/>
<line x1="724.5" y1="651.1" x2="727.5" y2="651.1" stroke="#000" stroke-width="1.2"/>
<line x1="724.5" y1="645.8" x2="727.5" y2="645.8" stroke="#000" stroke-width="1.2"/>
<line x1="724.5" y1="640.5" x2="727.5" y2="640.5" stroke="#000" stroke-width="1.2"/>
<line x1="724.5" y1="635.1" x2="727.5" y2="635.1" stroke="#000" stroke-width="1.2"/>
<line x1="723.5" y1="629.8" x2="727.5" y2="629.8" stroke="#000" stroke-width="1.2"/>
<line x1="724.5" y1="624.4" x2="727.5" y2="624.4" stroke="#000" stroke-width="1.2"/>
<line x1="724.5" y1="619.0" x2="727.5" y2="619.0" stroke="#000" stroke-width="1.2"/>
<line x1="724.5" y1="613.7" x2="727.5" y2="613.7" stroke="#000" stroke-width="1.2"/>
<line x1="724.5" y1="608.4" x2="727.5" y2="608.4" stroke="#000" stroke-width="1.2"/>
<line x1="723.5" y1="603.0" x2="727.5" y2="603.0" stroke="#000" stroke-width="1.2"/>
<line x1="724.5" y1="597.6" x2="727.5" y2="597.6" stroke="#000" stroke-width="1.2"/>
<line x1="724.5" y1="592.3" x2="727.5" y2="592.3" stroke="#000" stroke-width="1.2"/>
<line x1="724.5" y1="587.0" x2="727.5" y2="587.0" stroke="#000" stroke-width="1.2"/>
<line x1="724.5" y1="581.6" x2="727.5" y2="581.6" stroke="#000" stroke-width="1.2"/>
<line x1="723.5" y1="576.2" x2="727.5" y2="576.2" stroke="#000" stroke-width="1.2"/>
<line x1="724.5" y1="570.9" x2="727.5" y2="570.9" stroke="#000" stroke-width="1.2"/>
<line x1="724.5" y1="565.5" x2="727.5" y2="565.5" stroke="#000" stroke-width="1.2"/>
<line x1="724.5" y1="560.2" x2="727.5" y2="560.2" stroke="#000" stroke-width="1.2"/>
<line x1="724.5" y1="554.9" x2="727.5" y2="554.9" stroke="#000" stroke-width="1.2"/>
<line x1="723.5" y1="549.5" x2="727.5" y2="549.5" stroke="#000" stroke-width="1.2"/>
<line x1="724.5" y1="544.1" x2="727.5" y2="544.1" stroke="#000" stroke-width="1.2"/>
<line x1="724.5" y1="538.8" x2="727.5" y2="538.8" stroke="#000" stroke-width="1.2"/>
<line x1="724.5" y1="533.5" x2="727.5" y2="533.5" stroke="#000" stroke-width="1.2"/>
<line x1="724.5" y1="528.1" x2="727.5" y2="528.1" stroke="#000" stroke-width="1.2"/>
<line x1="723.5" y1="522.8" x2="727.5" y2="522.8" stroke="#000" stroke-width="1.2"/>
<line x1="724.5" y1="517.4" x2="727.5" y2="517.4" stroke="#000" stroke-width="1.2"/>
<line x1="724.5" y1="512.0" x2="727.5" y2="512.0" stroke="#000" stroke-width="1.2"/>
<line x1="724.5" y1="506.7" x2="727.5" y2="506.7" stroke="#000" stroke-width="1.2"/>
<line x1="724.5" y1="501.4" x2="727.5" y2="501.4" stroke="#000" stroke-width="1.2"/>
<line x1="723.5" y1="496.0" x2="727.5" y2="496.0" stroke="#000" stroke-width="1.2"/>
<line x1="724.5" y1="490.6" x2="727.5" y2="490.6" stroke="#000" stroke-width="1.2"/>
<line x1="724.5" y1="485.3" x2="727.5" y2="485.3" stroke="#000" stroke-width="1.2"/>
<line x1="724.5" y1="479.9" x2="727.5" y2="479.9" stroke="#000" stroke-width="1.2"/>
<line x1="724.5" y1="474.6" x2="727.5" y2="474.6" stroke="#000" stroke-width="1.2"/>
<line x1="723.5" y1="469.2" x2="727.5" y2="469.2" stroke="#000" stroke-width="1.2"/>
<line x1="724.5" y1="463.9" x2="727.5" y2="463.9" stroke="#000" stroke-width="1.2"/>
<line x1="724.5" y1="458.6" x2="727.5" y2="458.6" stroke="#000" stroke-width="1.2"/>
<line x1="724.5" y1="453.2" x2="727.5" y2="453.2" stroke="#000" stroke-width="1.2"/>
<line x1="724.5" y1="447.9" x2="727.5" y2="447.9" stroke="#000" stroke-width="1.2"/>
<line x1="723.5" y1="442.5" x2="727.5" y2="442.5" stroke="#000" stroke-width="1.2"/>
<line x1="724.5" y1="437.1" x2="727.5" y2="437.1" stroke="#000" stroke-width="1.2"/>
<line x1="724.5" y1="431.8" x2="727.5" y2="431.8" stroke="#000" stroke-width="1.2"/>
<line x1="724.5" y1="426.4" x2="727.5" y2="426.4" stroke="#000" stroke-width="1.2"/>
<line x1="724.5" y1="421.1" x2="727.5" y2="421.1" stroke="#000" stroke-width="1.2"/>
<line x1="723.5" y1="415.8" x2="727.5" y2="415.8" stroke="#000" stroke-width="1.2"/>
<line x1="724.5" y1="410.4" x2="727.5" y2="410.4" stroke="#000" stroke-width="1.2"/>
<line x1="724.5" y1="405.1" x2="727.5" y2="405.1" stroke="#000" stroke-width="1.2"/>
<line x1="724.5" y1="399.7" x2="727.5" y2="399.7" stroke="#000" stroke-width="1.2"/>
<line x1="724.5" y1="394.4" x2="727.5" y2="394.4" stroke="#000" stroke-width="1.2"/>
<line x1="723.5" y1="389.0" x2="727.5" y2="389.0" stroke="#000" stroke-width="1.2"/>
<line x1="724.5" y1="383.6" x2="727.5" y2="383.6" stroke="#000" stroke-width="1.2"/>
<line x1="724.5" y1="378.3" x2="727.5" y2="378.3" stroke="#000" stroke-width="1.2"/>
<line x1="724.5" y1="373.0" x2="727.5" y2="373.0" stroke="#000" stroke-width="1.2"/>
<line x1="724.5" y1="367.6" x2="727.5" y2="367.6" stroke="#000" stroke-width="1.2"/>
<line x1="723.5" y1="362.2" x2="727.5" y2="362.2" stroke="#000" stroke-width="1.2"/>
<line x1="724.5" y1="356.9" x2="727.5" y2="356.9" stroke="#000" stroke-width="1.2"/>
<line x1="724.5" y1="351.6" x2="727.5" y2="351.6" stroke="#000" stroke-width="1.2"/>
<line x1="724.5" y1="346.2" x2="727.5" y2="346.2" stroke="#000" stroke-width="1.2"/>
<line x1="724.5" y1="340.9" x2="727.5" y2="340.9" stroke="#000" stroke-width="1.2"/>
<line x1="723.5" y1="335.5" x2="727.5" y2="335.5" stroke="#000" stroke-width="1.2"/>
<text x="465.5" y="567.5" text-anchor="middle" font-family="Liberation Sans, sans-serif" font-size="11.5" fill="#111">-50</text>
<text x="491.7" y="567.5" text-anchor="middle" font-family="Liberation Sans, sans-serif" font-size="11.5" fill="#111">-45</text>
<text x="517.9" y="567.5" text-anchor="middle" font-family="Liberation Sans, sans-serif" font-size="11.5" fill="#111">-40</text>
<text x="544.1" y="567.5" text-anchor="middle" font-family="Liberation Sans, sans-serif" font-size="11.5" fill="#111">-35</text>
<text x="570.2" y="567.5" text-anchor="middle" font-family="Liberation Sans, sans-serif" font-size="11.5" fill="#111">-30</text>
<text x="596.4" y="567.5" text-anchor="middle" font-family="Liberation Sans, sans-serif" font-size="11.5" fill="#111">-25</text>
<text x="622.6" y="567.5" text-anchor="middle" font-family="Liberation Sans, sans-serif" font-size="11.5" fill="#111">-20</text>
<text x="648.8" y="567.5" text-anchor="middle" font-family="Liberation Sans, sans-serif" font-size="11.5" fill="#111">-15</text>
<text x="674.9" y="567.5" text-anchor="middle" font-family="Liberation Sans, sans-serif" font-size="11.5" fill="#111">-10</text>
<text x="701.1" y="567.5" text-anchor="middle" font-family="Liberation Sans, sans-serif" font-size="11.5" fill="#111">-5</text>
<text x="727.3" y="567.5" text-anchor="middle" font-family="Liberation Sans, sans-serif" font-size="11.5" fill="#111">0</text>
<text x="753.5" y="567.5" text-anchor="middle" font-family="Liberation Sans, sans-serif" font-size="11.5" fill="#111">5</text>
<text x="779.6" y="567.5" text-anchor="middle" font-family="Liberation Sans, sans-serif" font-size="11.5" fill="#111">10</text>
<text x="805.8" y="567.5" text-anchor="middle" font-family="Liberation Sans, sans-serif" font-size="11.5" fill="#111">15</text>
<text x="832.0" y="567.5" text-anchor="middle" font-family="Liberation Sans, sans-serif" font-size="11.5" fill="#111">20</text>
<text x="858.2" y="567.5" text-anchor="middle" font-family="Liberation Sans, sans-serif" font-size="11.5" fill="#111">25</text>
<text x="884.3" y="567.5" text-anchor="middle" font-family="Liberation Sans, sans-serif" font-size="11.5" fill="#111">30</text>
<text x="910.5" y="567.5" text-anchor="middle" font-family="Liberation Sans, sans-serif" font-size="11.5" fill="#111">35</text>
<text x="936.7" y="567.5" text-anchor="middle" font-family="Liberation Sans, sans-serif" font-size="11.5" fill="#111">40</text>
<text x="962.9" y="567.5" text-anchor="middle" font-family="Liberation Sans, sans-serif" font-size="11.5" fill="#111">45</text>
<text x="989.0" y="567.5" text-anchor="middle" font-family="Liberation Sans, sans-serif" font-size="11.5" fill="#111">50</text>
<text x="717.0" y="714.0" text-anchor="end" font-family="Liberation Sans, sans-serif" font-size="11.5" fill="#111">-30</text>
<text x="717.0" y="687.2" text-anchor="end" font-family="Liberation Sans, sans-serif" font-size="11.5" fill="#111">-25</text>
<text x="717.0" y="660.5" text-anchor="end" font-family="Liberation Sans, sans-serif" font-size="11.5" fill="#111">-20</text>
<text x="717.0" y="633.8" text-anchor="end" font-family="Liberation Sans, sans-serif" font-size="11.5" fill="#111">-15</text>
<text x="717.0" y="607.0" text-anchor="end" font-family="Liberation Sans, sans-serif" font-size="11.5" fill="#111">-10</text>
<text x="717.0" y="580.2" text-anchor="end" font-family="Liberation Sans, sans-serif" font-size="11.5" fill="#111">-5</text>
<text x="717.0" y="553.5" text-anchor="end" font-family="Liberation Sans, sans-serif" font-size="11.5" fill="#111">0</text>
<text x="717.0" y="526.8" text-anchor="end" font-family="Liberation Sans, sans-serif" font-size="11.5" fill="#111">5</text>
<text x="717.0" y="500.0" text-anchor="end" font-family="Liberation Sans, sans-serif" font-size="11.5" fill="#111">10</text>
<text x="717.0" y="473.2" text-anchor="end" font-family="Liberation Sans, sans-serif" font-size="11.5" fill="#111">15</text>
<text x="717.0" y="446.5" text-anchor="end" font-family="Liberation Sans, sans-serif" font-size="11.5" fill="#111">20</text>
<text x="717.0" y="419.8" text-anchor="end" font-family="Liberation Sans, sans-serif" font-size="11.5" fill="#111">25</text>
<text x="717.0" y="393.0" text-anchor="end" font-family="Liberation Sans, sans-serif" font-size="11.5" fill="#111">30</text>
<text x="717.0" y="366.2" text-anchor="end" font-family="Liberation Sans, sans-serif" font-size="11.5" fill="#111">35</text>
<text x="717.0" y="339.5" text-anchor="end" font-family="Liberation Sans, sans-serif" font-size="11.5" fill="#111">40</text>
<polyline points="533.6,549.0 536.2,548.0 538.8,547.2 541.5,546.3 544.1,545.4 546.7,544.6 549.3,543.7 551.9,542.9 554.5,542.1 557.2,541.3 559.8,540.5 562.4,539.7 565.0,538.9 567.6,538.2 570.2,537.4 572.9,536.7 575.5,536.0 578.1,535.2 580.7,534.6 583.3,533.9 586.0,533.2 588.6,532.5 591.2,531.9 593.8,531.3 596.4,530.6 599.0,530.0 601.7,529.4 604.3,528.9 606.9,528.3 609.5,527.7 612.1,527.2 614.7,526.6 617.4,526.1 620.0,525.6 622.6,525.1 625.2,524.6 627.8,524.1 630.5,523.7 633.1,523.2 635.7,522.8 638.3,522.4 640.9,522.0 643.5,521.6 646.2,521.2 648.8,520.8 651.4,520.4 654.0,520.1 656.6,519.7 659.2,519.4 661.9,519.1 664.5,518.8 667.1,518.5 669.7,518.2 672.3,518.0 674.9,517.7 677.6,517.5 680.2,517.3 682.8,517.0 685.4,516.8 688.0,516.6 690.7,516.5 693.3,516.3 695.9,516.1 698.5,516.0 701.1,515.9 703.7,515.8 706.4,515.7 709.0,515.6 711.6,515.5 714.2,515.4 716.8,515.4 719.4,515.3 722.1,515.3 724.7,515.3 727.3,515.3 729.9,515.3 732.5,515.3 735.2,515.3 737.8,515.4 740.4,515.4 743.0,515.5 745.6,515.6 748.2,515.7 750.9,515.8 753.5,515.9 756.1,516.0 758.7,516.1 761.3,516.3 763.9,516.5 766.6,516.6 769.2,516.8 771.8,517.0 774.4,517.3 777.0,517.5 779.6,517.7 782.3,518.0 784.9,518.2 787.5,518.5 790.1,518.8 792.7,519.1 795.4,519.4 798.0,519.7 800.6,520.1 803.2,520.4 805.8,520.8 808.4,521.2 811.1,521.6 813.7,522.0 816.3,522.4 818.9,522.8 821.5,523.2 824.1,523.7 826.8,524.1 829.4,524.6 832.0,525.1 834.6,525.6 837.2,526.1 839.9,526.6 842.5,527.2 845.1,527.7 847.7,528.3 850.3,528.9 852.9,529.4 855.6,530.0 858.2,530.6 860.8,531.3 863.4,531.9 866.0,532.5 868.6,533.2 871.3,533.9 873.9,534.6 876.5,535.2 879.1,536.0 881.7,536.7 884.3,537.4 887.0,538.2 889.6,538.9 892.2,539.7 894.8,540.5 897.4,541.3 900.1,542.1 902.7,542.9 905.3,543.7 907.9,544.6 910.5,545.4 913.1,546.3 915.8,547.2 918.4,548.0 921.0,549.0" fill="none" stroke="#F8A0F0" stroke-width="4.5"/>
<polyline points="533.6,549.0 536.2,548.0 538.8,547.2 541.5,546.3 544.1,545.4 546.7,544.6 549.3,543.7 551.9,542.9 554.5,542.1 557.2,541.3 559.8,540.5 562.4,539.7 565.0,538.9 567.6,538.2 570.2,537.4 572.9,536.7 575.5,536.0 578.1,535.2 580.7,534.6 583.3,533.9 586.0,533.2 588.6,532.5 591.2,531.9 593.8,531.3 596.4,530.6 599.0,530.0 601.7,529.4 604.3,528.9 606.9,528.3 609.5,527.7 612.1,527.2 614.7,526.6 617.4,526.1 620.0,525.6 622.6,525.1 625.2,524.6 627.8,524.1 630.5,523.7 633.1,523.2 635.7,522.8 638.3,522.4 640.9,522.0 643.5,521.6 646.2,521.2 648.8,520.8 651.4,520.4 654.0,520.1 656.6,519.7 659.2,519.4 661.9,519.1 664.5,518.8 667.1,518.5 669.7,518.2 672.3,518.0 674.9,517.7 677.6,517.5 680.2,517.3 682.8,517.0 685.4,516.8 688.0,516.6 690.7,516.5 693.3,516.3 695.9,516.1 698.5,516.0 701.1,515.9 703.7,515.8 706.4,515.7 709.0,515.6 711.6,515.5 714.2,515.4 716.8,515.4 719.4,515.3 722.1,515.3 724.7,515.3 727.3,515.3 729.9,515.3 732.5,515.3 735.2,515.3 737.8,515.4 740.4,515.4 743.0,515.5 745.6,515.6 748.2,515.7 750.9,515.8 753.5,515.9 756.1,516.0 758.7,516.1 761.3,516.3 763.9,516.5 766.6,516.6 769.2,516.8 771.8,517.0 774.4,517.3 777.0,517.5 779.6,517.7 782.3,518.0 784.9,518.2 787.5,518.5 790.1,518.8 792.7,519.1 795.4,519.4 798.0,519.7 800.6,520.1 803.2,520.4 805.8,520.8 808.4,521.2 811.1,521.6 813.7,522.0 816.3,522.4 818.9,522.8 821.5,523.2 824.1,523.7 826.8,524.1 829.4,524.6 832.0,525.1 834.6,525.6 837.2,526.1 839.9,526.6 842.5,527.2 845.1,527.7 847.7,528.3 850.3,528.9 852.9,529.4 855.6,530.0 858.2,530.6 860.8,531.3 863.4,531.9 866.0,532.5 868.6,533.2 871.3,533.9 873.9,534.6 876.5,535.2 879.1,536.0 881.7,536.7 884.3,537.4 887.0,538.2 889.6,538.9 892.2,539.7 894.8,540.5 897.4,541.3 900.1,542.1 902.7,542.9 905.3,543.7 907.9,544.6 910.5,545.4 913.1,546.3 915.8,547.2 918.4,548.0 921.0,549.0" fill="none" stroke="#D020C8" stroke-width="2"/>
<polyline points="538.8,550.1 541.5,549.2 544.1,548.3 546.7,547.5 549.3,546.7 551.9,545.8 554.5,545.0 557.2,544.2 559.8,543.4 562.4,542.6 565.0,541.9 567.6,541.1 570.2,540.4 572.9,539.6 575.5,538.9 578.1,538.2 580.7,537.5 583.3,536.8 586.0,536.1 588.6,535.5 591.2,534.8 593.8,534.2 596.4,533.6 599.0,533.0 601.7,532.4 604.3,531.8 606.9,531.2 609.5,530.7 612.1,530.1 614.7,529.6 617.4,529.1 620.0,528.5 622.6,528.0 625.2,527.6 627.8,527.1 630.5,526.6 633.1,526.2 635.7,525.7 638.3,525.3 640.9,524.9 643.5,524.5 646.2,524.1 648.8,523.7 651.4,523.4 654.0,523.0 656.6,522.7 659.2,522.4 661.9,522.0 664.5,521.7 667.1,521.5 669.7,521.2 672.3,520.9 674.9,520.7 677.6,520.4 680.2,520.2 682.8,520.0 685.4,519.8 688.0,519.6 690.7,519.4 693.3,519.2 695.9,519.1 698.5,518.9 701.1,518.8 703.7,518.7 706.4,518.6 709.0,518.5 711.6,518.4 714.2,518.4 716.8,518.3 719.4,518.3 722.1,518.2 724.7,518.2 727.3,518.2 729.9,518.2 732.5,518.2 735.2,518.3 737.8,518.3 740.4,518.4 743.0,518.4 745.6,518.5 748.2,518.6 750.9,518.7 753.5,518.8 756.1,518.9 758.7,519.1 761.3,519.2 763.9,519.4 766.6,519.6 769.2,519.8 771.8,520.0 774.4,520.2 777.0,520.4 779.6,520.7 782.3,520.9 784.9,521.2 787.5,521.5 790.1,521.7 792.7,522.0 795.4,522.4 798.0,522.7 800.6,523.0 803.2,523.4 805.8,523.7 808.4,524.1 811.1,524.5 813.7,524.9 816.3,525.3 818.9,525.7 821.5,526.2 824.1,526.6 826.8,527.1 829.4,527.6 832.0,528.0 834.6,528.5 837.2,529.1 839.9,529.6 842.5,530.1 845.1,530.7 847.7,531.2 850.3,531.8 852.9,532.4 855.6,533.0 858.2,533.6 860.8,534.2 863.4,534.8 866.0,535.5 868.6,536.1 871.3,536.8 873.9,537.5 876.5,538.2 879.1,538.9 881.7,539.6 884.3,540.4 887.0,541.1 889.6,541.9 892.2,542.6 894.8,543.4 897.4,544.2 900.1,545.0 902.7,545.8 905.3,546.7 907.9,547.5 910.5,548.3 913.1,549.2 915.8,550.1" fill="none" stroke="#B040B0" stroke-width="1" stroke-dasharray="3,2"/>
<line x1="586.0" y1="523.3" x2="868.6" y2="523.3" stroke="#8A1818" stroke-width="1"/>
<line x1="586.0" y1="525.8" x2="868.6" y2="525.8" stroke="#8A1818" stroke-width="1"/>
<line x1="534.9" y1="542.5" x2="919.7" y2="542.5" stroke="#8A1818" stroke-width="1"/>
<line x1="728.4" y1="531.1" x2="606.9" y2="459.6" stroke="#40C040" stroke-width="1.2"/>
<path d="M724.4,527.1 L732.4,535.1 M732.4,527.1 L724.4,535.1" stroke="#22DD22" stroke-width="3.5"/>
<polyline points="534.9,624.9 534.9,542.8 586.0,526.1 588.8,523.7 589.0,519.5 589.4,515.3 589.8,511.2 590.4,507.0 591.1,502.9 592.0,498.8 592.9,494.7 594.0,490.7 595.2,486.6 596.5,482.7 597.9,478.7 599.4,474.8 601.0,471.0 602.8,467.2 604.6,463.5 606.6,459.8 608.7,456.2 610.8,452.6 613.1,449.1 615.5,445.7 618.0,442.3 620.5,439.1 623.2,435.9 626.0,432.8 628.8,429.8 631.7,426.8 634.7,424.0 637.8,421.2 641.0,418.6 644.3,416.0 647.6,413.5 651.0,411.2 654.4,408.9 658.0,406.8 661.5,404.7 665.2,402.8 668.9,401.0 672.6,399.3 676.4,397.7 680.2,396.0 774.4,396.0 778.2,397.7 782.0,399.3 785.7,401.0 789.4,402.8 793.1,404.7 796.6,406.8 800.2,408.9 803.6,411.2 807.0,413.5 810.3,416.0 813.6,418.6 816.8,421.2 819.9,424.0 822.9,426.8 825.8,429.8 828.6,432.8 831.4,435.9 834.1,439.1 836.6,442.3 839.1,445.7 841.5,449.1 843.8,452.6 845.9,456.2 848.0,459.8 850.0,463.5 851.8,467.2 853.6,471.0 855.2,474.8 856.7,478.7 858.1,482.7 859.4,486.6 860.6,490.7 861.7,494.7 862.6,498.8 863.5,502.9 864.2,507.0 864.8,511.2 865.2,515.3 865.6,519.5 865.8,523.7 868.6,526.1 919.7,542.8 919.7,624.9" fill="none" stroke="#7A0A0A" stroke-width="4.2" stroke-linejoin="round" stroke-linecap="round"/>
<line x1="690.7" y1="396.0" x2="690.7" y2="384.7" stroke="#7A0A0A" stroke-width="3.5" stroke-linecap="round"/>
<line x1="763.9" y1="396.0" x2="763.9" y2="384.7" stroke="#7A0A0A" stroke-width="3.5" stroke-linecap="round"/>
<path d="M734.1,373 C737,420 741,455 755,475 C770,495 800,508 865.5,524" fill="none" stroke="#2828C0" stroke-width="1.1"/>
</svg>
<div style="position:absolute;left:768px;top:122px;width:243px;height:171px;background:#fff;border:2px solid #444;"></div>
<svg style="position:absolute;left:0;top:0" width="1142" height="785">
<text x="775" y="137" font-family="Liberation Sans, sans-serif" font-size="13.5" letter-spacing="0.4" fill="#B02838" stroke="#B02838" stroke-width="0.35">Coordinate</text>
<text x="775" y="152" font-family="Liberation Sans, sans-serif" font-size="13.5" letter-spacing="0.4" fill="#B02838" stroke="#B02838" stroke-width="0.35">locations</text>
<line x1="959.5" y1="124" x2="959.5" y2="293" stroke="#777" stroke-width="1" stroke-dasharray="5,3,1,3"/>
<line x1="775" y1="230.5" x2="1012" y2="230.5" stroke="#555" stroke-width="1" stroke-dasharray="5,3,1,3"/>
<line x1="834" y1="201.5" x2="1012" y2="201.5" stroke="#A07070" stroke-width="1"/>
<line x1="821" y1="211.5" x2="1012" y2="211.5" stroke="#A07070" stroke-width="1"/>
<line x1="794" y1="220.5" x2="1012" y2="220.5" stroke="#A07070" stroke-width="1"/>
<path d="M794,231 C805,228 830,223 880,222 L1012,221" fill="none" stroke="#C020C0" stroke-width="2.5"/>
<line x1="852" y1="183.5" x2="912" y2="251" stroke="#70D070" stroke-width="1"/>
<line x1="814" y1="189" x2="834" y2="201" stroke="#E0C880" stroke-width="1"/>
<line x1="814" y1="189" x2="821" y2="211.5" stroke="#E0C880" stroke-width="1"/>
<path d="M794,294 L794,221 L821,212 Q829,209 834,201 C843,187 866,162 886,161.7 L1012,161.7" fill="none" stroke="#6A1010" stroke-width="2"/>
<line x1="915.5" y1="149" x2="915.5" y2="162" stroke="#6A1010" stroke-width="1.5"/>
<line x1="1001" y1="149" x2="1001" y2="162" stroke="#6A1010" stroke-width="1.5"/>
<circle cx="886" cy="161.7" r="3.5" fill="#FFF0D8" fill-opacity="0.6" stroke="#D06035" stroke-width="1.2"/>
<circle cx="814" cy="189" r="3.5" fill="#FFF0D8" fill-opacity="0.6" stroke="#D06035" stroke-width="1.2"/>
<circle cx="834" cy="201" r="3.5" fill="#FFF0D8" fill-opacity="0.6" stroke="#D06035" stroke-width="1.2"/>
<circle cx="821" cy="212" r="3.5" fill="#FFF0D8" fill-opacity="0.6" stroke="#D06035" stroke-width="1.2"/>
<circle cx="794" cy="221" r="3.5" fill="#FFF0D8" fill-opacity="0.6" stroke="#D06035" stroke-width="1.2"/>
<circle cx="912" cy="251.5" r="3.5" fill="#F0D070" stroke="#C07020" stroke-width="1"/>
<path d="M909.5,249 L914.5,254 M914.5,249 L909.5,254" stroke="#208020" stroke-width="1"/>
<text x="880" y="156" font-family="Liberation Sans, sans-serif" font-size="10.5" font-weight="bold" fill="#1C2C90">C1</text>
<text x="807" y="184" font-family="Liberation Sans, sans-serif" font-size="10.5" font-weight="bold" fill="#1C2C90">C8</text>
<text x="827" y="196" font-family="Liberation Sans, sans-serif" font-size="10.5" font-weight="bold" fill="#1C2C90">C7</text>
<text x="804" y="208" font-family="Liberation Sans, sans-serif" font-size="10.5" font-weight="bold" fill="#1C2C90">C3</text>
<text x="787" y="214" font-family="Liberation Sans, sans-serif" font-size="10.5" font-weight="bold" fill="#1C2C90">C4</text>
<text x="915" y="247" font-family="Liberation Sans, sans-serif" font-size="10.5" font-weight="bold" fill="#1C2C90">C6</text>
</svg>
</body></html>
